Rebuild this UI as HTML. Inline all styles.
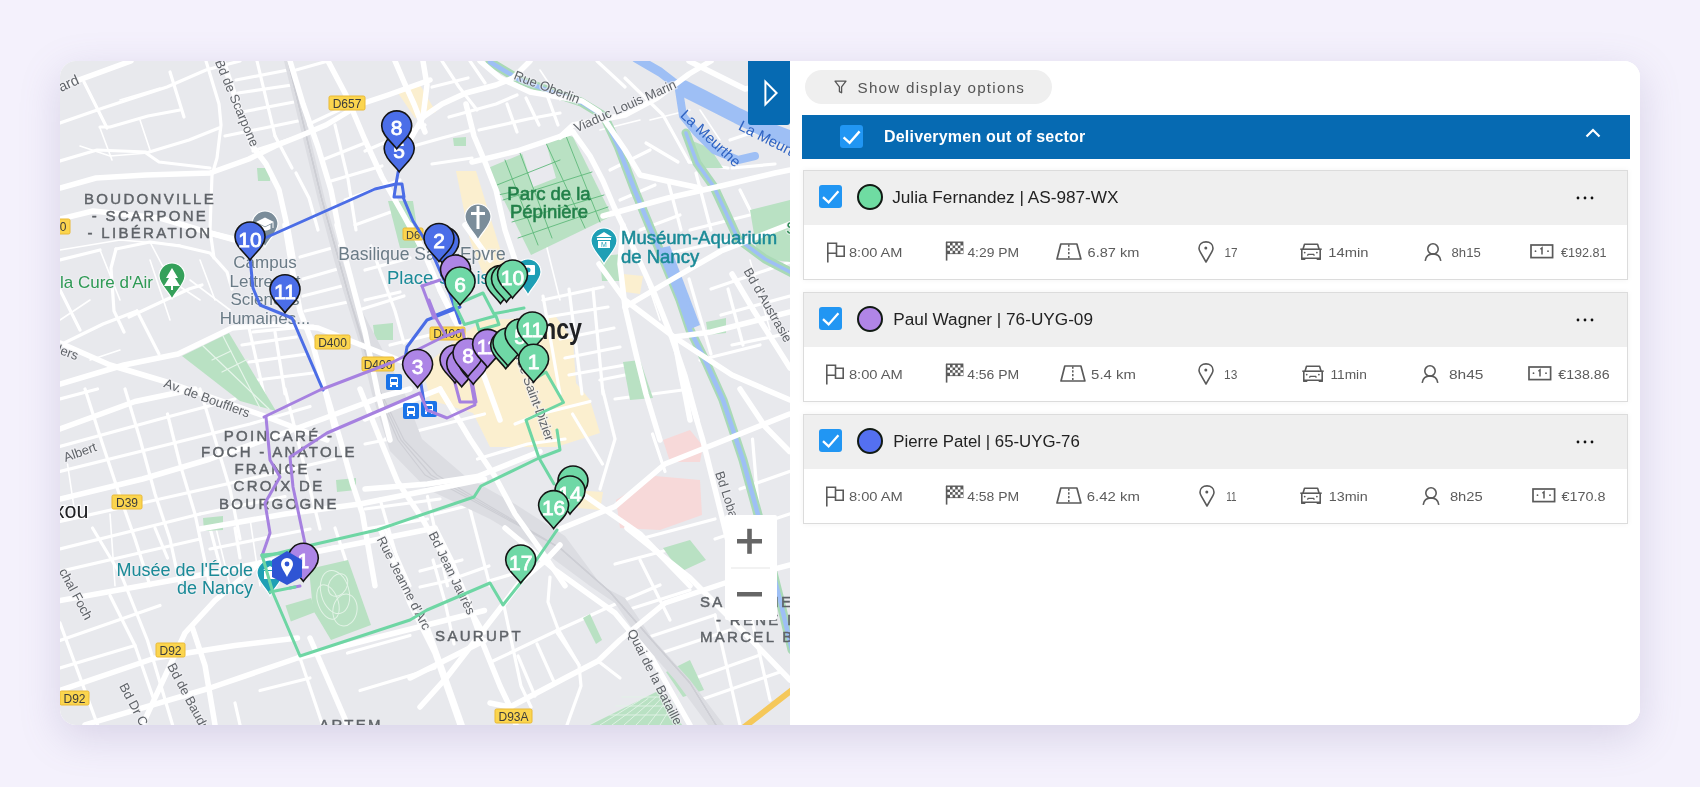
<!DOCTYPE html>
<html><head><meta charset="utf-8">
<style>
*{box-sizing:border-box;margin:0;padding:0}
#card,#overlay{will-change:transform}
html,body{width:1700px;height:787px;overflow:hidden;background:#f4f1fc;font-family:"Liberation Sans",sans-serif}
#card{position:absolute;left:60px;top:61px;width:1580px;height:664px;border-radius:16px;background:#fff;box-shadow:0 12px 40px rgba(120,105,160,0.22);overflow:hidden}
#map{position:absolute;left:0;top:0;width:730px;height:664px;background:#e8e9ed;overflow:hidden}
#panel{position:absolute;left:730px;top:0;width:850px;height:664px;background:#fff}
.abs{position:absolute}
#toggle{position:absolute;left:688px;top:0;width:42px;height:64px;background:#066ab2;border-radius:0 0 3px 3px}
#pill{position:absolute;left:745px;top:9px;width:247px;height:34px;border-radius:17px;background:#efefef}
#pill .t{position:absolute;left:52.5px;top:9px;font-size:15.2px;color:#555;white-space:nowrap;letter-spacing:1.25px}
#hdr{position:absolute;left:742px;top:54px;width:828px;height:44px;background:#066ab2}
.cb{position:absolute;width:23px;height:23px;border-radius:3px;background:#2196f3}
.cb svg{position:absolute;left:0;top:0}
#hdr .t{position:absolute;left:82px;top:13px;font-size:16px;font-weight:bold;color:#fff;white-space:nowrap;letter-spacing:0.2px}
.dcard{position:absolute;left:743px;width:825px;height:110px;border:1px solid #dcdcdc;background:#fff;box-shadow:0 0 6px rgba(0,0,0,0.05)}
.dcard .h{position:absolute;left:0;top:0;width:823px;height:54px;background:#efefef}
.dcard .nm{position:absolute;left:89px;top:18px;font-size:16px;color:#222;white-space:nowrap;letter-spacing:0.6px}
.dcard .dot{position:absolute;left:53px;top:13px;width:26px;height:26px;border-radius:50%;border:2px solid #111a14}
.dcard .more{position:absolute;left:772px;top:25px;width:18px;height:4px}
.cols{position:absolute;left:0;top:54px;width:823px;height:55px;display:flex}
.col{flex:1;display:flex;align-items:center;justify-content:center;color:#5a5a5a;font-size:13px;white-space:nowrap;letter-spacing:0.6px}
.col svg{flex:none}
</style></head><body>
<div id="card">
  <div id="map"><svg width="730" height="664" viewBox="60 61 730 664" style="position:absolute;left:0;top:0;font-family:Liberation Sans,sans-serif"><polygon points="423.0,367.0 456.0,340.0 483.0,320.0 556.0,317.0 573.0,340.0 576.0,383.0 590.0,400.0 600.0,433.0 556.0,447.0 490.0,447.0 473.0,413.0 430.0,400.0" fill="#fbefcf" /><polygon points="456.0,171.0 476.0,171.0 506.0,268.0 483.0,274.0 470.0,240.0" fill="#fbefcf" /><polygon points="396.0,90.0 420.0,85.0 436.0,112.0 415.0,118.0" fill="#fbefcf" /><polygon points="573.0,490.0 603.0,492.0 600.0,510.0 578.0,508.0" fill="#fbefcf" /><polygon points="623.0,274.0 643.0,276.0 640.0,294.0 625.0,292.0" fill="#fbefcf" /><polygon points="616.0,500.0 655.0,476.0 700.0,480.0 702.0,515.0 660.0,530.0 620.0,528.0" fill="#f7d9d9" /><polygon points="663.0,440.0 690.0,430.0 703.0,446.0 700.0,462.0 670.0,462.0" fill="#f7d9d9" /><polyline points="60.0,123.0 103.0,108.0 167.0,87.0 206.0,70.0 240.0,61.0" fill="none" stroke="#ffffff" stroke-width="3.2" stroke-linejoin="round" stroke-linecap="round" /><polyline points="84.0,82.0 107.0,128.0" fill="none" stroke="#ffffff" stroke-width="3.2" stroke-linejoin="round" stroke-linecap="round" /><polyline points="206.0,61.0 219.0,104.0 221.0,125.0 217.0,158.0 212.0,175.0 210.0,230.0 214.0,258.0" fill="none" stroke="#ffffff" stroke-width="3.2" stroke-linejoin="round" stroke-linecap="round" /><polyline points="219.0,128.0 189.0,140.0 146.0,153.0 159.0,162.0 210.0,168.0" fill="none" stroke="#ffffff" stroke-width="3.2" stroke-linejoin="round" stroke-linecap="round" /><polyline points="236.0,80.0 288.0,70.0" fill="none" stroke="#ffffff" stroke-width="3.2" stroke-linejoin="round" stroke-linecap="round" /><polyline points="238.0,93.0 292.0,85.0" fill="none" stroke="#ffffff" stroke-width="3.2" stroke-linejoin="round" stroke-linecap="round" /><polyline points="242.0,112.0 294.0,102.0" fill="none" stroke="#ffffff" stroke-width="3.2" stroke-linejoin="round" stroke-linecap="round" /><polyline points="225.0,136.0 298.0,121.0" fill="none" stroke="#ffffff" stroke-width="3.2" stroke-linejoin="round" stroke-linecap="round" /><polyline points="253.0,151.0 300.0,136.0" fill="none" stroke="#ffffff" stroke-width="3.2" stroke-linejoin="round" stroke-linecap="round" /><polyline points="257.0,61.0 275.0,136.0" fill="none" stroke="#ffffff" stroke-width="3.2" stroke-linejoin="round" stroke-linecap="round" /><polyline points="275.0,136.0 292.0,168.0" fill="none" stroke="#ffffff" stroke-width="3.2" stroke-linejoin="round" stroke-linecap="round" /><polyline points="296.0,70.0 328.0,61.0" fill="none" stroke="#ffffff" stroke-width="3.2" stroke-linejoin="round" stroke-linecap="round" /><polyline points="307.0,125.0 339.0,110.0" fill="none" stroke="#ffffff" stroke-width="3.2" stroke-linejoin="round" stroke-linecap="round" /><polyline points="322.0,160.0 365.0,143.0" fill="none" stroke="#ffffff" stroke-width="3.2" stroke-linejoin="round" stroke-linecap="round" /><polyline points="331.0,181.0 382.0,166.0" fill="none" stroke="#ffffff" stroke-width="3.2" stroke-linejoin="round" stroke-linecap="round" /><polyline points="335.0,125.0 348.0,179.0 356.0,230.0" fill="none" stroke="#ffffff" stroke-width="3.2" stroke-linejoin="round" stroke-linecap="round" /><polyline points="296.0,173.0 309.0,198.0 318.0,230.0" fill="none" stroke="#ffffff" stroke-width="3.2" stroke-linejoin="round" stroke-linecap="round" /><polyline points="365.0,151.0 425.0,125.0" fill="none" stroke="#ffffff" stroke-width="3.2" stroke-linejoin="round" stroke-linecap="round" /><polyline points="60.0,161.0 97.0,150.0 146.0,152.0" fill="none" stroke="#ffffff" stroke-width="3.2" stroke-linejoin="round" stroke-linecap="round" /><polyline points="100.0,127.0 110.0,127.0 148.0,116.0 180.0,110.0" fill="none" stroke="#ffffff" stroke-width="3.2" stroke-linejoin="round" stroke-linecap="round" /><polyline points="170.0,72.0 184.0,117.0" fill="none" stroke="#ffffff" stroke-width="3.2" stroke-linejoin="round" stroke-linecap="round" /><polyline points="345.0,200.0 400.0,180.0" fill="none" stroke="#ffffff" stroke-width="3.2" stroke-linejoin="round" stroke-linecap="round" /><polyline points="355.0,225.0 410.0,205.0" fill="none" stroke="#ffffff" stroke-width="3.2" stroke-linejoin="round" stroke-linecap="round" /><polyline points="80.0,146.0 110.0,156.0 148.0,153.0" fill="none" stroke="#ffffff" stroke-width="1.6" stroke-linejoin="round" stroke-linecap="round" /><polyline points="100.0,128.0 112.0,160.0" fill="none" stroke="#ffffff" stroke-width="1.6" stroke-linejoin="round" stroke-linecap="round" /><polyline points="120.0,100.0 160.0,88.0" fill="none" stroke="#ffffff" stroke-width="1.6" stroke-linejoin="round" stroke-linecap="round" /><polyline points="140.0,120.0 150.0,150.0" fill="none" stroke="#ffffff" stroke-width="1.6" stroke-linejoin="round" stroke-linecap="round" /><polyline points="60.0,250.0 120.0,240.0 180.0,245.0" fill="none" stroke="#ffffff" stroke-width="1.6" stroke-linejoin="round" stroke-linecap="round" /><polyline points="100.0,250.0 120.0,300.0" fill="none" stroke="#ffffff" stroke-width="1.6" stroke-linejoin="round" stroke-linecap="round" /><polyline points="150.0,260.0 170.0,320.0" fill="none" stroke="#ffffff" stroke-width="1.6" stroke-linejoin="round" stroke-linecap="round" /><polyline points="190.0,280.0 230.0,310.0" fill="none" stroke="#ffffff" stroke-width="1.6" stroke-linejoin="round" stroke-linecap="round" /><polyline points="442.0,61.0 459.0,87.0 477.0,110.0" fill="none" stroke="#ffffff" stroke-width="3.2" stroke-linejoin="round" stroke-linecap="round" /><polyline points="470.0,61.0 485.0,83.0" fill="none" stroke="#ffffff" stroke-width="3.2" stroke-linejoin="round" stroke-linecap="round" /><polyline points="432.0,87.0 468.0,78.0" fill="none" stroke="#ffffff" stroke-width="3.2" stroke-linejoin="round" stroke-linecap="round" /><polyline points="449.0,117.0 496.0,104.0 517.0,95.0" fill="none" stroke="#ffffff" stroke-width="3.2" stroke-linejoin="round" stroke-linecap="round" /><polyline points="410.0,147.0 442.0,138.0 472.0,130.0" fill="none" stroke="#ffffff" stroke-width="3.2" stroke-linejoin="round" stroke-linecap="round" /><polyline points="432.0,164.0 472.0,158.0" fill="none" stroke="#ffffff" stroke-width="3.2" stroke-linejoin="round" stroke-linecap="round" /><polyline points="507.0,104.0 517.0,132.0" fill="none" stroke="#ffffff" stroke-width="3.2" stroke-linejoin="round" stroke-linecap="round" /><polyline points="526.0,98.0 539.0,125.0" fill="none" stroke="#ffffff" stroke-width="3.2" stroke-linejoin="round" stroke-linecap="round" /><polyline points="547.0,95.0 558.0,125.0" fill="none" stroke="#ffffff" stroke-width="3.2" stroke-linejoin="round" stroke-linecap="round" /><polyline points="479.0,130.0 528.0,119.0 560.0,113.0" fill="none" stroke="#ffffff" stroke-width="3.2" stroke-linejoin="round" stroke-linecap="round" /><polyline points="625.0,78.0 663.0,115.0 689.0,162.0" fill="none" stroke="#ffffff" stroke-width="3.2" stroke-linejoin="round" stroke-linecap="round" /><polyline points="597.0,61.0 625.0,87.0" fill="none" stroke="#ffffff" stroke-width="3.2" stroke-linejoin="round" stroke-linecap="round" /><polyline points="646.0,143.0 678.0,162.0" fill="none" stroke="#ffffff" stroke-width="3.2" stroke-linejoin="round" stroke-linecap="round" /><polyline points="689.0,162.0 728.0,168.0" fill="none" stroke="#ffffff" stroke-width="3.2" stroke-linejoin="round" stroke-linecap="round" /><polyline points="732.0,168.0 775.0,164.0" fill="none" stroke="#ffffff" stroke-width="3.2" stroke-linejoin="round" stroke-linecap="round" /><polyline points="668.0,181.0 681.0,230.0" fill="none" stroke="#ffffff" stroke-width="3.2" stroke-linejoin="round" stroke-linecap="round" /><polyline points="696.0,173.0 711.0,230.0" fill="none" stroke="#ffffff" stroke-width="3.2" stroke-linejoin="round" stroke-linecap="round" /><polyline points="610.0,170.0 650.0,150.0" fill="none" stroke="#ffffff" stroke-width="3.2" stroke-linejoin="round" stroke-linecap="round" /><polyline points="620.0,200.0 655.0,185.0" fill="none" stroke="#ffffff" stroke-width="3.2" stroke-linejoin="round" stroke-linecap="round" /><polyline points="730.0,140.0 775.0,125.0" fill="none" stroke="#ffffff" stroke-width="3.2" stroke-linejoin="round" stroke-linecap="round" /><polyline points="740.0,190.0 760.0,230.0" fill="none" stroke="#ffffff" stroke-width="3.2" stroke-linejoin="round" stroke-linecap="round" /><polyline points="640.0,230.0 680.0,215.0" fill="none" stroke="#ffffff" stroke-width="3.2" stroke-linejoin="round" stroke-linecap="round" /><polyline points="540.0,70.0 560.0,100.0" fill="none" stroke="#ffffff" stroke-width="1.6" stroke-linejoin="round" stroke-linecap="round" /><polyline points="600.0,130.0 640.0,120.0" fill="none" stroke="#ffffff" stroke-width="1.6" stroke-linejoin="round" stroke-linecap="round" /><polyline points="700.0,110.0 720.0,140.0" fill="none" stroke="#ffffff" stroke-width="1.6" stroke-linejoin="round" stroke-linecap="round" /><polyline points="650.0,120.0 690.0,110.0" fill="none" stroke="#ffffff" stroke-width="1.6" stroke-linejoin="round" stroke-linecap="round" /><polyline points="116.0,249.0 150.0,242.0 180.0,246.0 210.0,253.0 227.0,272.0 232.0,289.0" fill="none" stroke="#ffffff" stroke-width="3.2" stroke-linejoin="round" stroke-linecap="round" /><polyline points="116.0,249.0 111.0,268.0 114.0,311.0 124.0,332.0" fill="none" stroke="#ffffff" stroke-width="3.2" stroke-linejoin="round" stroke-linecap="round" /><polyline points="129.0,317.0 189.0,289.0 202.0,285.0" fill="none" stroke="#ffffff" stroke-width="3.2" stroke-linejoin="round" stroke-linecap="round" /><polyline points="60.0,345.0 103.0,324.0 137.0,311.0" fill="none" stroke="#ffffff" stroke-width="3.2" stroke-linejoin="round" stroke-linecap="round" /><polyline points="137.0,311.0 159.0,354.0" fill="none" stroke="#ffffff" stroke-width="3.2" stroke-linejoin="round" stroke-linecap="round" /><polyline points="300.0,257.0 339.0,246.0" fill="none" stroke="#ffffff" stroke-width="3.2" stroke-linejoin="round" stroke-linecap="round" /><polyline points="303.0,279.0 341.0,268.0" fill="none" stroke="#ffffff" stroke-width="3.2" stroke-linejoin="round" stroke-linecap="round" /><polyline points="303.0,296.0 346.0,285.0" fill="none" stroke="#ffffff" stroke-width="3.2" stroke-linejoin="round" stroke-linecap="round" /><polyline points="305.0,311.0 348.0,302.0" fill="none" stroke="#ffffff" stroke-width="3.2" stroke-linejoin="round" stroke-linecap="round" /><polyline points="253.0,332.0 313.0,326.0" fill="none" stroke="#ffffff" stroke-width="3.2" stroke-linejoin="round" stroke-linecap="round" /><polyline points="242.0,345.0 296.0,337.0" fill="none" stroke="#ffffff" stroke-width="3.2" stroke-linejoin="round" stroke-linecap="round" /><polyline points="249.0,362.0 307.0,354.0" fill="none" stroke="#ffffff" stroke-width="3.2" stroke-linejoin="round" stroke-linecap="round" /><polyline points="257.0,380.0 313.0,373.0" fill="none" stroke="#ffffff" stroke-width="3.2" stroke-linejoin="round" stroke-linecap="round" /><polyline points="249.0,328.0 264.0,394.0" fill="none" stroke="#ffffff" stroke-width="3.2" stroke-linejoin="round" stroke-linecap="round" /><polyline points="275.0,332.0 285.0,394.0" fill="none" stroke="#ffffff" stroke-width="3.2" stroke-linejoin="round" stroke-linecap="round" /><polyline points="371.0,246.0 395.0,311.0 404.0,343.0" fill="none" stroke="#ffffff" stroke-width="3.2" stroke-linejoin="round" stroke-linecap="round" /><polyline points="356.0,311.0 404.0,296.0" fill="none" stroke="#ffffff" stroke-width="3.2" stroke-linejoin="round" stroke-linecap="round" /><polyline points="60.0,290.0 80.0,330.0" fill="none" stroke="#ffffff" stroke-width="3.2" stroke-linejoin="round" stroke-linecap="round" /><polyline points="60.0,260.0 100.0,250.0" fill="none" stroke="#ffffff" stroke-width="3.2" stroke-linejoin="round" stroke-linecap="round" /><polyline points="150.0,242.0 170.0,280.0 200.0,300.0" fill="none" stroke="#ffffff" stroke-width="1.6" stroke-linejoin="round" stroke-linecap="round" /><polyline points="60.0,320.0 90.0,300.0" fill="none" stroke="#ffffff" stroke-width="1.6" stroke-linejoin="round" stroke-linecap="round" /><polyline points="90.0,360.0 120.0,350.0" fill="none" stroke="#ffffff" stroke-width="1.6" stroke-linejoin="round" stroke-linecap="round" /><polyline points="200.0,260.0 215.0,300.0" fill="none" stroke="#ffffff" stroke-width="1.6" stroke-linejoin="round" stroke-linecap="round" /><polyline points="543.0,300.0 603.0,287.0" fill="none" stroke="#ffffff" stroke-width="3.2" stroke-linejoin="round" stroke-linecap="round" /><polyline points="547.0,317.0 608.0,307.0" fill="none" stroke="#ffffff" stroke-width="3.2" stroke-linejoin="round" stroke-linecap="round" /><polyline points="560.0,339.0 614.0,328.0" fill="none" stroke="#ffffff" stroke-width="3.2" stroke-linejoin="round" stroke-linecap="round" /><polyline points="565.0,358.0 620.0,347.0" fill="none" stroke="#ffffff" stroke-width="3.2" stroke-linejoin="round" stroke-linecap="round" /><polyline points="569.0,375.0 625.0,365.0" fill="none" stroke="#ffffff" stroke-width="3.2" stroke-linejoin="round" stroke-linecap="round" /><polyline points="543.0,296.0 560.0,394.0" fill="none" stroke="#ffffff" stroke-width="3.2" stroke-linejoin="round" stroke-linecap="round" /><polyline points="569.0,289.0 582.0,394.0" fill="none" stroke="#ffffff" stroke-width="3.2" stroke-linejoin="round" stroke-linecap="round" /><polyline points="593.0,289.0 603.0,394.0" fill="none" stroke="#ffffff" stroke-width="3.2" stroke-linejoin="round" stroke-linecap="round" /><polyline points="711.0,289.0 790.0,262.0" fill="none" stroke="#ffffff" stroke-width="3.2" stroke-linejoin="round" stroke-linecap="round" /><polyline points="721.0,315.0 790.0,296.0" fill="none" stroke="#ffffff" stroke-width="3.2" stroke-linejoin="round" stroke-linecap="round" /><polyline points="732.0,345.0 790.0,333.0" fill="none" stroke="#ffffff" stroke-width="3.2" stroke-linejoin="round" stroke-linecap="round" /><polyline points="689.0,279.0 711.0,354.0" fill="none" stroke="#ffffff" stroke-width="3.2" stroke-linejoin="round" stroke-linecap="round" /><polyline points="728.0,289.0 743.0,345.0" fill="none" stroke="#ffffff" stroke-width="3.2" stroke-linejoin="round" stroke-linecap="round" /><polyline points="670.0,253.0 730.0,240.0" fill="none" stroke="#ffffff" stroke-width="3.2" stroke-linejoin="round" stroke-linecap="round" /><polyline points="690.0,230.0 750.0,215.0" fill="none" stroke="#ffffff" stroke-width="3.2" stroke-linejoin="round" stroke-linecap="round" /><polyline points="700.0,360.0 760.0,345.0" fill="none" stroke="#ffffff" stroke-width="3.2" stroke-linejoin="round" stroke-linecap="round" /><polyline points="600.0,380.0 640.0,372.0" fill="none" stroke="#ffffff" stroke-width="3.2" stroke-linejoin="round" stroke-linecap="round" /><polyline points="365.0,270.0 410.0,258.0" fill="none" stroke="#ffffff" stroke-width="3.2" stroke-linejoin="round" stroke-linecap="round" /><polyline points="365.0,300.0 400.0,292.0" fill="none" stroke="#ffffff" stroke-width="3.2" stroke-linejoin="round" stroke-linecap="round" /><polyline points="390.0,345.0 430.0,335.0" fill="none" stroke="#ffffff" stroke-width="3.2" stroke-linejoin="round" stroke-linecap="round" /><polyline points="560.0,300.0 545.0,240.0" fill="none" stroke="#ffffff" stroke-width="1.6" stroke-linejoin="round" stroke-linecap="round" /><polyline points="640.0,260.0 660.0,320.0" fill="none" stroke="#ffffff" stroke-width="1.6" stroke-linejoin="round" stroke-linecap="round" /><polyline points="750.0,260.0 770.0,330.0" fill="none" stroke="#ffffff" stroke-width="1.6" stroke-linejoin="round" stroke-linecap="round" /><polyline points="60.0,399.0 97.5,389.0" fill="none" stroke="#ffffff" stroke-width="3.2" stroke-linejoin="round" stroke-linecap="round" /><polyline points="60.0,446.5 160.0,419.0 235.0,399.0" fill="none" stroke="#ffffff" stroke-width="3.2" stroke-linejoin="round" stroke-linecap="round" /><polyline points="60.0,471.5 160.0,446.5 250.0,424.0 310.0,406.5" fill="none" stroke="#ffffff" stroke-width="3.2" stroke-linejoin="round" stroke-linecap="round" /><polyline points="60.0,521.5 160.0,499.0 260.0,476.5 335.0,459.0" fill="none" stroke="#ffffff" stroke-width="3.2" stroke-linejoin="round" stroke-linecap="round" /><polyline points="60.0,549.0 160.0,524.0 200.0,514.0" fill="none" stroke="#ffffff" stroke-width="3.2" stroke-linejoin="round" stroke-linecap="round" /><polyline points="60.0,571.5 135.0,554.0 200.0,539.0" fill="none" stroke="#ffffff" stroke-width="3.2" stroke-linejoin="round" stroke-linecap="round" /><polyline points="85.0,389.0 102.5,444.0 120.0,496.5 135.0,539.0 150.0,585.8" fill="none" stroke="#ffffff" stroke-width="3.2" stroke-linejoin="round" stroke-linecap="round" /><polyline points="125.0,389.0 140.0,439.0 155.0,494.0 170.0,539.0 180.0,585.8" fill="none" stroke="#ffffff" stroke-width="3.2" stroke-linejoin="round" stroke-linecap="round" /><polyline points="167.5,414.0 180.0,464.0 195.0,514.0 210.0,585.8" fill="none" stroke="#ffffff" stroke-width="3.2" stroke-linejoin="round" stroke-linecap="round" /><polyline points="200.0,389.0 215.0,439.0 230.0,489.0 240.0,539.0" fill="none" stroke="#ffffff" stroke-width="3.2" stroke-linejoin="round" stroke-linecap="round" /><polyline points="285.0,389.0 297.5,439.0 310.0,489.0 320.0,529.0" fill="none" stroke="#ffffff" stroke-width="3.2" stroke-linejoin="round" stroke-linecap="round" /><polyline points="397.5,389.0 410.0,426.5 435.0,476.5" fill="none" stroke="#ffffff" stroke-width="3.2" stroke-linejoin="round" stroke-linecap="round" /><polyline points="200.0,514.0 285.0,496.5" fill="none" stroke="#ffffff" stroke-width="3.2" stroke-linejoin="round" stroke-linecap="round" /><polyline points="210.0,549.0 310.0,529.0" fill="none" stroke="#ffffff" stroke-width="3.2" stroke-linejoin="round" stroke-linecap="round" /><polyline points="222.5,571.5 335.0,546.5" fill="none" stroke="#ffffff" stroke-width="3.2" stroke-linejoin="round" stroke-linecap="round" /><polyline points="385.0,529.0 410.0,585.8" fill="none" stroke="#ffffff" stroke-width="3.2" stroke-linejoin="round" stroke-linecap="round" /><polyline points="435.0,514.0 484.5,501.5" fill="none" stroke="#ffffff" stroke-width="3.2" stroke-linejoin="round" stroke-linecap="round" /><polyline points="385.0,439.0 484.5,414.0" fill="none" stroke="#ffffff" stroke-width="3.2" stroke-linejoin="round" stroke-linecap="round" /><polyline points="67.5,464.0 75.0,514.0" fill="none" stroke="#ffffff" stroke-width="1.6" stroke-linejoin="round" stroke-linecap="round" /><polyline points="110.0,514.0 115.0,585.8" fill="none" stroke="#ffffff" stroke-width="1.6" stroke-linejoin="round" stroke-linecap="round" /><polyline points="215.0,524.0 230.0,585.8" fill="none" stroke="#ffffff" stroke-width="1.6" stroke-linejoin="round" stroke-linecap="round" /><polyline points="250.0,519.0 260.0,585.8" fill="none" stroke="#ffffff" stroke-width="1.6" stroke-linejoin="round" stroke-linecap="round" /><polyline points="515.0,424.0 540.0,414.0 590.0,401.5" fill="none" stroke="#ffffff" stroke-width="3.2" stroke-linejoin="round" stroke-linecap="round" /><polyline points="477.5,459.0 527.5,444.0 565.0,439.0" fill="none" stroke="#ffffff" stroke-width="3.2" stroke-linejoin="round" stroke-linecap="round" /><polyline points="602.5,389.0 615.0,439.0 600.0,489.0" fill="none" stroke="#ffffff" stroke-width="3.2" stroke-linejoin="round" stroke-linecap="round" /><polyline points="572.5,414.0 602.5,464.0" fill="none" stroke="#ffffff" stroke-width="3.2" stroke-linejoin="round" stroke-linecap="round" /><polyline points="365.0,509.0 440.0,499.0" fill="none" stroke="#ffffff" stroke-width="3.2" stroke-linejoin="round" stroke-linecap="round" /><polyline points="365.0,529.0 427.5,519.0" fill="none" stroke="#ffffff" stroke-width="3.2" stroke-linejoin="round" stroke-linecap="round" /><polyline points="380.0,499.0 405.0,585.8" fill="none" stroke="#ffffff" stroke-width="3.2" stroke-linejoin="round" stroke-linecap="round" /><polyline points="427.5,496.5 447.5,585.8" fill="none" stroke="#ffffff" stroke-width="3.2" stroke-linejoin="round" stroke-linecap="round" /><polyline points="470.0,509.0 490.0,585.8" fill="none" stroke="#ffffff" stroke-width="3.2" stroke-linejoin="round" stroke-linecap="round" /><polyline points="615.0,399.0 690.0,389.0" fill="none" stroke="#ffffff" stroke-width="3.2" stroke-linejoin="round" stroke-linecap="round" /><polyline points="652.5,434.0 665.0,471.5" fill="none" stroke="#ffffff" stroke-width="3.2" stroke-linejoin="round" stroke-linecap="round" /><polyline points="640.0,539.0 715.0,519.0" fill="none" stroke="#ffffff" stroke-width="3.2" stroke-linejoin="round" stroke-linecap="round" /><polyline points="615.0,564.0 690.0,544.0" fill="none" stroke="#ffffff" stroke-width="3.2" stroke-linejoin="round" stroke-linecap="round" /><polyline points="715.0,539.0 789.5,514.0" fill="none" stroke="#ffffff" stroke-width="3.2" stroke-linejoin="round" stroke-linecap="round" /><polyline points="740.0,489.0 789.5,471.5" fill="none" stroke="#ffffff" stroke-width="3.2" stroke-linejoin="round" stroke-linecap="round" /><polyline points="752.5,439.0 765.0,585.8" fill="none" stroke="#ffffff" stroke-width="3.2" stroke-linejoin="round" stroke-linecap="round" /><polyline points="365.0,444.0 415.0,434.0" fill="none" stroke="#ffffff" stroke-width="3.2" stroke-linejoin="round" stroke-linecap="round" /><polyline points="92.5,528.0 122.5,578.0 147.5,640.5 172.5,724.8" fill="none" stroke="#ffffff" stroke-width="3.2" stroke-linejoin="round" stroke-linecap="round" /><polyline points="60.0,640.5 110.0,623.0 160.0,605.5" fill="none" stroke="#ffffff" stroke-width="3.2" stroke-linejoin="round" stroke-linecap="round" /><polyline points="60.0,668.0 135.0,645.5" fill="none" stroke="#ffffff" stroke-width="3.2" stroke-linejoin="round" stroke-linecap="round" /><polyline points="110.0,595.5 135.0,645.5 155.0,703.0" fill="none" stroke="#ffffff" stroke-width="3.2" stroke-linejoin="round" stroke-linecap="round" /><polyline points="60.0,623.0 97.5,724.8" fill="none" stroke="#ffffff" stroke-width="3.2" stroke-linejoin="round" stroke-linecap="round" /><polyline points="210.0,528.0 220.0,565.5" fill="none" stroke="#ffffff" stroke-width="3.2" stroke-linejoin="round" stroke-linecap="round" /><polyline points="235.0,528.0 240.0,558.0" fill="none" stroke="#ffffff" stroke-width="3.2" stroke-linejoin="round" stroke-linecap="round" /><polyline points="300.0,658.0 322.5,724.8" fill="none" stroke="#ffffff" stroke-width="3.2" stroke-linejoin="round" stroke-linecap="round" /><polyline points="335.0,528.0 347.5,565.5" fill="none" stroke="#ffffff" stroke-width="3.2" stroke-linejoin="round" stroke-linecap="round" /><polyline points="347.5,653.0 410.0,635.5" fill="none" stroke="#ffffff" stroke-width="3.2" stroke-linejoin="round" stroke-linecap="round" /><polyline points="360.0,690.5 435.0,668.0" fill="none" stroke="#ffffff" stroke-width="3.2" stroke-linejoin="round" stroke-linecap="round" /><polyline points="435.0,528.0 460.0,590.5 484.5,633.0" fill="none" stroke="#ffffff" stroke-width="3.2" stroke-linejoin="round" stroke-linecap="round" /><polyline points="260.0,690.5 310.0,678.0" fill="none" stroke="#ffffff" stroke-width="3.2" stroke-linejoin="round" stroke-linecap="round" /><polyline points="235.0,703.0 240.0,724.8" fill="none" stroke="#ffffff" stroke-width="3.2" stroke-linejoin="round" stroke-linecap="round" /><polyline points="155.0,528.0 167.5,558.0" fill="none" stroke="#ffffff" stroke-width="3.2" stroke-linejoin="round" stroke-linecap="round" /><polyline points="420.0,571.0 462.0,560.0" fill="none" stroke="#ffffff" stroke-width="3.2" stroke-linejoin="round" stroke-linecap="round" /><polyline points="489.0,581.0 516.0,573.0" fill="none" stroke="#ffffff" stroke-width="3.2" stroke-linejoin="round" stroke-linecap="round" /><polyline points="493.0,661.0 556.0,631.0 620.0,602.0 660.0,585.0" fill="none" stroke="#ffffff" stroke-width="3.2" stroke-linejoin="round" stroke-linecap="round" /><polyline points="504.0,606.0 521.0,686.0 531.0,707.0" fill="none" stroke="#ffffff" stroke-width="3.2" stroke-linejoin="round" stroke-linecap="round" /><polyline points="518.0,656.0 535.0,696.0" fill="none" stroke="#ffffff" stroke-width="3.2" stroke-linejoin="round" stroke-linecap="round" /><polyline points="537.0,644.0 554.0,682.0" fill="none" stroke="#ffffff" stroke-width="3.2" stroke-linejoin="round" stroke-linecap="round" /><polyline points="556.0,631.0 579.0,665.0" fill="none" stroke="#ffffff" stroke-width="3.2" stroke-linejoin="round" stroke-linecap="round" /><polyline points="550.0,577.0 548.0,602.0 558.0,629.0 579.0,665.0 581.0,686.0 567.0,725.0" fill="none" stroke="#ffffff" stroke-width="3.2" stroke-linejoin="round" stroke-linecap="round" /><polyline points="433.0,560.0 445.0,602.0 454.0,644.0" fill="none" stroke="#ffffff" stroke-width="3.2" stroke-linejoin="round" stroke-linecap="round" /><polyline points="420.0,587.0 447.0,581.0 489.0,566.0" fill="none" stroke="#ffffff" stroke-width="3.2" stroke-linejoin="round" stroke-linecap="round" /><polyline points="598.0,661.0 620.0,678.0" fill="none" stroke="#ffffff" stroke-width="3.2" stroke-linejoin="round" stroke-linecap="round" /><polyline points="627.0,610.0 690.0,590.0" fill="none" stroke="#ffffff" stroke-width="3.2" stroke-linejoin="round" stroke-linecap="round" /><polyline points="640.0,640.0 715.0,615.0" fill="none" stroke="#ffffff" stroke-width="3.2" stroke-linejoin="round" stroke-linecap="round" /><polyline points="655.0,655.0 730.0,630.0" fill="none" stroke="#ffffff" stroke-width="3.2" stroke-linejoin="round" stroke-linecap="round" /><polyline points="690.0,680.0 760.0,655.0" fill="none" stroke="#ffffff" stroke-width="3.2" stroke-linejoin="round" stroke-linecap="round" /><polyline points="700.0,700.0 780.0,672.0" fill="none" stroke="#ffffff" stroke-width="3.2" stroke-linejoin="round" stroke-linecap="round" /><polyline points="715.0,615.0 740.0,725.0" fill="none" stroke="#ffffff" stroke-width="3.2" stroke-linejoin="round" stroke-linecap="round" /><polyline points="745.0,590.0 770.0,700.0" fill="none" stroke="#ffffff" stroke-width="3.2" stroke-linejoin="round" stroke-linecap="round" /><polyline points="640.0,560.0 670.0,620.0" fill="none" stroke="#ffffff" stroke-width="3.2" stroke-linejoin="round" stroke-linecap="round" /><polygon points="488.0,168.0 567.0,135.0 573.0,137.0 612.0,216.0 531.0,255.0" fill="#b9e1c3" /><polygon points="522.0,153.0 546.0,143.0 556.0,178.0 533.0,187.0" fill="#e9e9ee" /><polyline points="505.0,160.0 538.0,245.0" fill="none" stroke="#5fb97b" stroke-width="0.9" stroke-linejoin="round" stroke-linecap="round" /><polyline points="520.0,153.0 552.0,238.0" fill="none" stroke="#5fb97b" stroke-width="0.9" stroke-linejoin="round" stroke-linecap="round" /><polyline points="546.0,143.0 585.0,228.0" fill="none" stroke="#5fb97b" stroke-width="0.9" stroke-linejoin="round" stroke-linecap="round" /><polyline points="566.0,136.0 600.0,222.0" fill="none" stroke="#5fb97b" stroke-width="0.9" stroke-linejoin="round" stroke-linecap="round" /><polyline points="497.0,185.0 560.0,160.0" fill="none" stroke="#5fb97b" stroke-width="0.9" stroke-linejoin="round" stroke-linecap="round" /><polyline points="503.0,200.0 592.0,172.0" fill="none" stroke="#5fb97b" stroke-width="0.9" stroke-linejoin="round" stroke-linecap="round" /><polyline points="512.0,222.0 604.0,195.0" fill="none" stroke="#5fb97b" stroke-width="0.9" stroke-linejoin="round" stroke-linecap="round" /><polyline points="518.0,238.0 608.0,207.0" fill="none" stroke="#5fb97b" stroke-width="0.9" stroke-linejoin="round" stroke-linecap="round" /><polyline points="498.0,195.0 512.0,192.0" fill="none" stroke="#5fb97b" stroke-width="0.9" stroke-linejoin="round" stroke-linecap="round" /><polygon points="182.0,356.0 229.0,333.0 276.0,411.0 240.0,401.0" fill="#b9e1c3" /><polyline points="202.0,345.0 269.0,409.0" fill="none" stroke="#e6f5ea" stroke-width="1.2" stroke-linejoin="round" stroke-linecap="round" /><polyline points="223.0,336.0 260.0,408.0" fill="none" stroke="#e6f5ea" stroke-width="1.2" stroke-linejoin="round" stroke-linecap="round" /><polyline points="212.0,360.0 231.0,351.0" fill="none" stroke="#e6f5ea" stroke-width="1.2" stroke-linejoin="round" stroke-linecap="round" /><polyline points="222.0,372.0 248.0,359.0" fill="none" stroke="#e6f5ea" stroke-width="1.2" stroke-linejoin="round" stroke-linecap="round" /><polygon points="309.0,569.0 348.0,560.0 371.0,625.0 331.0,640.0 313.0,610.0" fill="#b9e1c3" /><ellipse cx="335" cy="592" rx="14" ry="22" transform="rotate(-15 335 592)" fill="none" stroke="#e2f3e6" stroke-width="1"/><ellipse cx="328" cy="602" rx="10" ry="18" transform="rotate(-20 328 602)" fill="none" stroke="#e2f3e6" stroke-width="1"/><ellipse cx="345" cy="610" rx="12" ry="16" transform="rotate(10 345 610)" fill="none" stroke="#e2f3e6" stroke-width="1"/><ellipse cx="338" cy="585" rx="9" ry="12" transform="rotate(30 338 585)" fill="none" stroke="#e2f3e6" stroke-width="1"/><polygon points="285.5,605.4 311.2,598.0 315.5,612.0 290.8,621.5" fill="#b9e1c3" /><polygon points="590.0,725.0 660.0,690.0 682.0,725.0" fill="#b9e1c3" /><polyline points="600.0,725.0 640.0,700.0" fill="none" stroke="#e2f3e6" stroke-width="0.9" stroke-linejoin="round" stroke-linecap="round" /><polyline points="612.0,725.0 648.0,698.5" fill="none" stroke="#e2f3e6" stroke-width="0.9" stroke-linejoin="round" stroke-linecap="round" /><polyline points="624.0,725.0 656.0,697.0" fill="none" stroke="#e2f3e6" stroke-width="0.9" stroke-linejoin="round" stroke-linecap="round" /><polyline points="636.0,725.0 664.0,695.5" fill="none" stroke="#e2f3e6" stroke-width="0.9" stroke-linejoin="round" stroke-linecap="round" /><polyline points="648.0,725.0 672.0,694.0" fill="none" stroke="#e2f3e6" stroke-width="0.9" stroke-linejoin="round" stroke-linecap="round" /><polyline points="660.0,725.0 680.0,692.5" fill="none" stroke="#e2f3e6" stroke-width="0.9" stroke-linejoin="round" stroke-linecap="round" /><polyline points="610.0,715.0 675.0,715.0" fill="none" stroke="#e2f3e6" stroke-width="0.9" stroke-linejoin="round" stroke-linecap="round" /><polyline points="616.0,706.0 673.0,706.0" fill="none" stroke="#e2f3e6" stroke-width="0.9" stroke-linejoin="round" stroke-linecap="round" /><polyline points="622.0,697.0 671.0,697.0" fill="none" stroke="#e2f3e6" stroke-width="0.9" stroke-linejoin="round" stroke-linecap="round" /><polygon points="666.0,672.0 690.0,660.0 704.0,690.0 683.0,697.0" fill="#b9e1c3" /><polygon points="663.0,548.0 690.0,540.0 706.0,560.0 680.0,572.0" fill="#b9e1c3" /><polygon points="583.0,618.0 590.0,614.0 602.0,640.0 596.0,644.0" fill="#b9e1c3" /><polygon points="203.0,518.0 223.0,516.0 223.0,530.0 204.0,531.0" fill="#b9e1c3" /><polygon points="336.0,480.0 356.0,478.0 356.0,490.0 337.0,492.0" fill="#b9e1c3" /><polygon points="373.0,325.0 393.0,323.0 393.0,340.0 375.0,340.0" fill="#b9e1c3" /><polygon points="623.0,362.0 640.0,360.0 653.0,398.0 630.0,400.0" fill="#b9e1c3" /><polygon points="706.0,322.0 726.0,318.0 726.0,333.0 708.0,335.0" fill="#b9e1c3" /><polygon points="600.0,256.0 623.0,254.0 623.0,281.0 602.0,281.0" fill="#b9e1c3" /><polygon points="750.0,210.0 790.0,200.0 790.0,262.0 758.0,258.0" fill="#b9e1c3" /><polygon points="690.0,140.0 710.0,148.0 723.0,168.0 700.0,168.0" fill="#b9e1c3" /><polygon points="257.0,168.0 270.0,168.0 270.0,181.0 258.0,181.0" fill="#b9e1c3" /><polygon points="388.0,201.0 413.0,201.0 420.0,248.0 400.0,248.0" fill="#b9e1c3" /><polygon points="453.0,138.0 466.0,137.0 466.0,146.0 454.0,146.0" fill="#b9e1c3" /><polygon points="284.0,61.0 318.0,200.0 334.0,260.0 346.0,300.0 360.0,345.0 372.0,394.0 390.0,451.0 427.0,489.0 490.0,519.0 540.0,549.0 590.0,586.0 615.0,603.0 640.0,640.0 675.0,680.0 708.0,725.0 724.0,725.0 690.0,680.0 652.0,638.0 625.0,598.0 602.0,586.0 565.0,536.0 515.0,504.0 465.0,476.0 422.0,439.0 405.0,394.0 380.0,345.0 356.0,300.0 342.0,260.0 325.0,200.0 292.0,61.0" fill="#dcdde2" /><polyline points="288.0,61.0 322.0,200.0 350.0,300.0 376.0,390.0 398.0,440.0 425.0,475.0 490.0,510.0 560.0,548.0 610.0,592.0 650.0,638.0 690.0,683.0 716.0,725.0" fill="none" stroke="#cdced4" stroke-width="1.2" stroke-linejoin="round" stroke-linecap="round" stroke-linecap="butt"/><polyline points="288.0,61.0 322.0,200.0 350.0,300.0 377.8,390.0 401.0,440.0 431.0,475.0 493.0,510.0 560.0,548.0 610.0,592.0 650.0,638.0 690.0,683.0 716.0,725.0" fill="none" stroke="#cdced4" stroke-width="1.2" stroke-linejoin="round" stroke-linecap="round" stroke-linecap="butt"/><polyline points="288.0,61.0 322.0,200.0 350.0,300.0 379.6,390.0 404.0,440.0 437.0,475.0 496.0,510.0 560.0,548.0 610.0,592.0 650.0,638.0 690.0,683.0 716.0,725.0" fill="none" stroke="#cdced4" stroke-width="1.2" stroke-linejoin="round" stroke-linecap="round" stroke-linecap="butt"/><polyline points="686.0,133.0 697.0,163.0 714.0,187.0 727.0,215.0 738.0,239.0 765.0,259.0 794.0,274.0" fill="none" stroke="#a9d9b6" stroke-width="9" stroke-linejoin="round" stroke-linecap="round" /><polyline points="686.0,133.0 697.0,163.0 714.0,187.0 727.0,215.0 738.0,239.0 765.0,259.0 794.0,274.0" fill="none" stroke="#9ebff5" stroke-width="3.5" stroke-linejoin="round" stroke-linecap="round" /><polygon points="751.0,211.0 790.0,203.0 790.0,252.0 765.0,240.0" fill="#b9e1c3" /><polyline points="490.0,62.0 520.0,80.0 560.0,95.0 581.0,102.0 604.0,116.0 618.0,146.0 635.0,191.0 652.0,232.0 666.0,266.0 680.0,300.0 690.0,330.0 706.0,362.0 723.0,400.0 743.0,460.0 763.0,533.0 780.0,600.0 792.0,650.0" fill="none" stroke="#a9d9b6" stroke-width="9" stroke-linejoin="round" stroke-linecap="round" /><polyline points="490.0,62.0 520.0,80.0 560.0,95.0 581.0,102.0 604.0,116.0 618.0,146.0 635.0,191.0 652.0,232.0 666.0,266.0 680.0,300.0 690.0,330.0 706.0,362.0 723.0,400.0 743.0,460.0 763.0,533.0 780.0,600.0 792.0,650.0" fill="none" stroke="#9ebff5" stroke-width="4.5" stroke-linejoin="round" stroke-linecap="round" /><polygon points="660.0,248.0 670.0,246.0 700.0,325.0 688.0,330.0" fill="#9ebff5" /><rect x="679.0" y="285" width="4" height="5" fill="#9ebff5" transform="rotate(-20 681.0 287)"/><rect x="682.2" y="293" width="4" height="5" fill="#9ebff5" transform="rotate(-20 684.2 295)"/><rect x="685.4" y="301" width="4" height="5" fill="#9ebff5" transform="rotate(-20 687.4 303)"/><rect x="688.6" y="309" width="4" height="5" fill="#9ebff5" transform="rotate(-20 690.6 311)"/><rect x="691.8" y="317" width="4" height="5" fill="#9ebff5" transform="rotate(-20 693.8 319)"/><polyline points="636.0,58.0 660.0,72.0 673.0,82.0 683.0,88.0" fill="none" stroke="#9ebff5" stroke-width="9" stroke-linejoin="round" stroke-linecap="round" /><polyline points="683.0,88.0 703.0,98.0 738.0,116.0 765.0,129.0 794.0,140.0" fill="none" stroke="#9ebff5" stroke-width="16" stroke-linejoin="round" stroke-linecap="round" /><polyline points="679.0,90.0 683.0,116.0 697.0,133.0 714.0,150.0 738.0,160.0 755.0,156.0" fill="none" stroke="#9ebff5" stroke-width="8" stroke-linejoin="round" stroke-linecap="round" /><polyline points="60.0,87.0 131.0,61.0" fill="none" stroke="#ffffff" stroke-width="5.5" stroke-linejoin="round" stroke-linecap="round" /><polyline points="60.0,188.0 96.0,178.0 146.0,175.0 210.0,173.0 249.0,159.0 275.0,146.0 300.0,136.0 326.0,125.0 361.0,104.0 388.0,95.0 430.0,80.0" fill="none" stroke="#ffffff" stroke-width="5.5" stroke-linejoin="round" stroke-linecap="round" /><polyline points="223.0,61.0 242.0,117.0 253.0,147.0 266.0,164.0 279.0,190.0 288.0,230.0 293.0,258.0" fill="none" stroke="#ffffff" stroke-width="5.5" stroke-linejoin="round" stroke-linecap="round" /><polyline points="290.0,61.0 303.0,104.0 318.0,147.0 331.0,190.0 339.0,230.0 346.0,258.0" fill="none" stroke="#ffffff" stroke-width="5.5" stroke-linejoin="round" stroke-linecap="round" /><polyline points="328.0,61.0 346.0,95.0 365.0,140.0 382.0,177.0 404.0,216.0 420.0,245.0" fill="none" stroke="#ffffff" stroke-width="5.5" stroke-linejoin="round" stroke-linecap="round" /><polyline points="395.0,61.0 404.0,82.0 414.0,104.0 425.0,132.0" fill="none" stroke="#ffffff" stroke-width="5.5" stroke-linejoin="round" stroke-linecap="round" /><polyline points="60.0,219.0 93.0,211.0 160.0,218.0 210.0,233.0 250.0,243.0" fill="none" stroke="#ffffff" stroke-width="5.5" stroke-linejoin="round" stroke-linecap="round" /><polyline points="480.0,61.0 500.0,78.0 530.0,92.0 582.0,101.0 599.0,112.0 608.0,125.0" fill="none" stroke="#ffffff" stroke-width="5.5" stroke-linejoin="round" stroke-linecap="round" /><polyline points="573.0,132.0 590.0,156.0 603.0,181.0 614.0,207.0 625.0,230.0 640.0,262.0 655.0,295.0 672.0,338.0 685.0,376.0 697.0,420.0" fill="none" stroke="#ffffff" stroke-width="5.5" stroke-linejoin="round" stroke-linecap="round" /><polyline points="560.0,137.0 573.0,125.0 625.0,115.0 657.0,98.0 689.0,74.0 711.0,61.0" fill="none" stroke="#ffffff" stroke-width="5.5" stroke-linejoin="round" stroke-linecap="round" /><polyline points="603.0,216.0 668.0,198.0 721.0,186.0 775.0,173.0 790.0,170.0" fill="none" stroke="#ffffff" stroke-width="5.5" stroke-linejoin="round" stroke-linecap="round" /><polyline points="423.0,117.0 442.0,104.0 466.0,93.0 496.0,85.0 513.0,78.0 530.0,61.0" fill="none" stroke="#ffffff" stroke-width="5.5" stroke-linejoin="round" stroke-linecap="round" /><polyline points="410.0,140.0 423.0,117.0 427.0,85.0 423.0,61.0" fill="none" stroke="#ffffff" stroke-width="5.5" stroke-linejoin="round" stroke-linecap="round" /><polyline points="472.0,162.0 517.0,151.0 573.0,132.0" fill="none" stroke="#ffffff" stroke-width="5.5" stroke-linejoin="round" stroke-linecap="round" /><polyline points="466.0,104.0 474.0,136.0 485.0,162.0 496.0,190.0 505.0,230.0 520.0,275.0" fill="none" stroke="#ffffff" stroke-width="5.5" stroke-linejoin="round" stroke-linecap="round" /><polyline points="608.0,125.0 625.0,150.0 640.0,175.0 667.0,181.0 700.0,188.0" fill="none" stroke="#ffffff" stroke-width="5.5" stroke-linejoin="round" stroke-linecap="round" /><polyline points="689.0,61.0 745.0,89.0 790.0,80.0" fill="none" stroke="#ffffff" stroke-width="5.5" stroke-linejoin="round" stroke-linecap="round" /><polyline points="210.0,233.0 235.0,240.0" fill="none" stroke="#ffffff" stroke-width="5.5" stroke-linejoin="round" stroke-linecap="round" /><polyline points="60.0,384.0 124.0,365.0 178.0,354.0 232.0,328.0 275.0,324.0 318.0,328.0 361.0,345.0 404.0,362.0 420.0,372.0" fill="none" stroke="#ffffff" stroke-width="5.5" stroke-linejoin="round" stroke-linecap="round" /><polyline points="60.0,343.0 110.0,365.0 170.0,383.0 267.0,417.0 327.0,440.0" fill="none" stroke="#ffffff" stroke-width="5.5" stroke-linejoin="round" stroke-linecap="round" /><polyline points="285.0,225.0 292.0,268.0 300.0,311.0 313.0,345.0 326.0,394.0 335.0,430.0" fill="none" stroke="#ffffff" stroke-width="5.5" stroke-linejoin="round" stroke-linecap="round" /><polyline points="337.0,225.0 348.0,268.0 365.0,332.0 378.0,394.0 390.0,440.0" fill="none" stroke="#ffffff" stroke-width="5.5" stroke-linejoin="round" stroke-linecap="round" /><polyline points="410.0,225.0 425.0,255.0 440.0,290.0 455.0,320.0" fill="none" stroke="#ffffff" stroke-width="5.5" stroke-linejoin="round" stroke-linecap="round" /><polyline points="599.0,264.0 625.0,300.0 674.0,337.0 732.0,375.0 790.0,400.0" fill="none" stroke="#ffffff" stroke-width="5.5" stroke-linejoin="round" stroke-linecap="round" /><polyline points="625.0,307.0 676.0,277.0 721.0,251.0 790.0,224.0" fill="none" stroke="#ffffff" stroke-width="5.5" stroke-linejoin="round" stroke-linecap="round" /><polyline points="623.0,225.0 620.0,264.0 625.0,307.0 636.0,354.0 646.0,394.0 660.0,440.0" fill="none" stroke="#ffffff" stroke-width="5.5" stroke-linejoin="round" stroke-linecap="round" /><polyline points="674.0,337.0 711.0,332.0 790.0,312.0" fill="none" stroke="#ffffff" stroke-width="5.5" stroke-linejoin="round" stroke-linecap="round" /><polyline points="674.0,337.0 681.0,375.0 685.0,394.0 690.0,420.0" fill="none" stroke="#ffffff" stroke-width="5.5" stroke-linejoin="round" stroke-linecap="round" /><polyline points="732.0,274.0 754.0,311.0 790.0,368.0" fill="none" stroke="#ffffff" stroke-width="5.5" stroke-linejoin="round" stroke-linecap="round" /><polyline points="465.0,225.0 490.0,260.0" fill="none" stroke="#ffffff" stroke-width="5.5" stroke-linejoin="round" stroke-linecap="round" /><polyline points="440.0,290.0 460.0,330.0 480.0,365.0 500.0,420.0" fill="none" stroke="#ffffff" stroke-width="5.5" stroke-linejoin="round" stroke-linecap="round" /><polyline points="60.0,499.0 142.5,479.0 210.0,459.0 267.5,439.0 322.5,419.0 382.5,396.5 410.0,389.0" fill="none" stroke="#ffffff" stroke-width="5.5" stroke-linejoin="round" stroke-linecap="round" /><polyline points="325.0,389.0 340.0,439.0 352.5,484.0 362.5,514.0 375.0,585.8" fill="none" stroke="#ffffff" stroke-width="5.5" stroke-linejoin="round" stroke-linecap="round" /><polyline points="200.0,529.0 285.0,514.0 360.0,504.0 435.0,489.0 484.5,479.0" fill="none" stroke="#ffffff" stroke-width="5.5" stroke-linejoin="round" stroke-linecap="round" /><polyline points="360.0,389.0 380.0,439.0 397.5,481.5 422.5,519.0 460.0,585.8" fill="none" stroke="#ffffff" stroke-width="5.5" stroke-linejoin="round" stroke-linecap="round" /><polyline points="60.0,429.0 135.0,401.5 195.0,389.0" fill="none" stroke="#ffffff" stroke-width="5.5" stroke-linejoin="round" stroke-linecap="round" /><polyline points="582.5,494.0 640.0,534.0 690.0,585.8" fill="none" stroke="#ffffff" stroke-width="5.5" stroke-linejoin="round" stroke-linecap="round" /><polyline points="560.0,529.0 615.0,506.5 665.0,464.0 715.0,444.0 789.5,414.0" fill="none" stroke="#ffffff" stroke-width="5.5" stroke-linejoin="round" stroke-linecap="round" /><polyline points="687.5,389.0 702.5,439.0 715.0,489.0 727.5,539.0 740.0,585.8" fill="none" stroke="#ffffff" stroke-width="5.5" stroke-linejoin="round" stroke-linecap="round" /><polyline points="740.0,389.0 765.0,426.5 789.5,451.5" fill="none" stroke="#ffffff" stroke-width="5.5" stroke-linejoin="round" stroke-linecap="round" /><polyline points="440.0,389.0 470.0,439.0 495.0,476.5 515.0,514.0 540.0,549.0 565.0,585.8" fill="none" stroke="#ffffff" stroke-width="5.5" stroke-linejoin="round" stroke-linecap="round" /><polyline points="365.0,489.0 427.5,484.0 477.5,476.5 540.0,451.5" fill="none" stroke="#ffffff" stroke-width="5.5" stroke-linejoin="round" stroke-linecap="round" /><polyline points="365.0,419.0 440.0,389.0" fill="none" stroke="#ffffff" stroke-width="5.5" stroke-linejoin="round" stroke-linecap="round" /><polyline points="60.0,600.5 185.0,578.0 260.0,563.0 310.0,553.0 385.0,538.0 435.0,528.0" fill="none" stroke="#ffffff" stroke-width="5.5" stroke-linejoin="round" stroke-linecap="round" /><polyline points="142.5,724.8 185.0,633.0 215.0,600.5 260.0,563.0" fill="none" stroke="#ffffff" stroke-width="5.5" stroke-linejoin="round" stroke-linecap="round" /><polyline points="60.0,690.5 155.0,658.0 235.0,645.5 297.5,638.0" fill="none" stroke="#ffffff" stroke-width="5.5" stroke-linejoin="round" stroke-linecap="round" /><polyline points="85.0,724.8 210.0,688.0 297.5,658.0 385.0,635.5 484.5,610.5" fill="none" stroke="#ffffff" stroke-width="5.5" stroke-linejoin="round" stroke-linecap="round" /><polyline points="192.5,628.0 205.0,665.5 215.0,724.8" fill="none" stroke="#ffffff" stroke-width="5.5" stroke-linejoin="round" stroke-linecap="round" /><polyline points="380.0,528.0 410.0,603.0 435.0,653.0 460.0,724.8" fill="none" stroke="#ffffff" stroke-width="5.5" stroke-linejoin="round" stroke-linecap="round" /><polyline points="310.0,638.0 347.5,724.8" fill="none" stroke="#ffffff" stroke-width="5.5" stroke-linejoin="round" stroke-linecap="round" /><polyline points="410.0,678.0 484.5,640.5" fill="none" stroke="#ffffff" stroke-width="5.5" stroke-linejoin="round" stroke-linecap="round" /><polyline points="505.0,528.0 555.0,570.0 615.0,613.0 652.0,658.0 690.0,725.0" fill="none" stroke="#ffffff" stroke-width="5.5" stroke-linejoin="round" stroke-linecap="round" /><polyline points="627.0,528.0 690.0,578.0 740.0,628.0 790.0,680.0" fill="none" stroke="#ffffff" stroke-width="5.5" stroke-linejoin="round" stroke-linecap="round" /><polyline points="420.0,707.0 447.0,677.0 502.0,606.0 521.0,581.0 546.0,560.0 560.0,545.0" fill="none" stroke="#ffffff" stroke-width="5.5" stroke-linejoin="round" stroke-linecap="round" /><polyline points="435.0,528.0 451.0,560.0 468.0,602.0 483.0,644.0 500.0,686.0 510.0,707.0 516.0,725.0" fill="none" stroke="#ffffff" stroke-width="5.5" stroke-linejoin="round" stroke-linecap="round" /><polyline points="490.0,703.0 510.0,707.0 567.0,677.0 598.0,661.0 620.0,640.0 665.0,603.0 740.0,578.0 790.0,565.0" fill="none" stroke="#ffffff" stroke-width="5.5" stroke-linejoin="round" stroke-linecap="round" /><polyline points="424.0,619.0 445.0,677.0 462.0,725.0" fill="none" stroke="#ffffff" stroke-width="5.5" stroke-linejoin="round" stroke-linecap="round" /><rect x="329" y="96" width="36" height="14" rx="1.5" fill="#fbd54e" stroke="#e9b936" stroke-width="1"/><text x="347.0" y="103.5" font-size="12" fill="#3c3c3c" font-weight="normal" text-anchor="middle" dominant-baseline="central" letter-spacing="0" >D657</text><rect x="315" y="335" width="35" height="14" rx="1.5" fill="#fbd54e" stroke="#e9b936" stroke-width="1"/><text x="332.5" y="342.5" font-size="12" fill="#3c3c3c" font-weight="normal" text-anchor="middle" dominant-baseline="central" letter-spacing="0" >D400</text><rect x="362" y="357" width="32" height="14" rx="1.5" fill="#fbd54e" stroke="#e9b936" stroke-width="1"/><text x="378.0" y="364.5" font-size="12" fill="#3c3c3c" font-weight="normal" text-anchor="middle" dominant-baseline="central" letter-spacing="0" >D400</text><rect x="430" y="327" width="35" height="13" rx="1.5" fill="#fbd54e" stroke="#e9b936" stroke-width="1"/><text x="447.5" y="334.0" font-size="12" fill="#3c3c3c" font-weight="normal" text-anchor="middle" dominant-baseline="central" letter-spacing="0" >D400</text><rect x="112" y="495" width="30" height="14" rx="1.5" fill="#fbd54e" stroke="#e9b936" stroke-width="1"/><text x="127.0" y="502.5" font-size="12" fill="#3c3c3c" font-weight="normal" text-anchor="middle" dominant-baseline="central" letter-spacing="0" >D39</text><rect x="156" y="643" width="29" height="14" rx="1.5" fill="#fbd54e" stroke="#e9b936" stroke-width="1"/><text x="170.5" y="650.5" font-size="12" fill="#3c3c3c" font-weight="normal" text-anchor="middle" dominant-baseline="central" letter-spacing="0" >D92</text><rect x="60" y="691" width="29" height="14" rx="1.5" fill="#fbd54e" stroke="#e9b936" stroke-width="1"/><text x="74.5" y="698.5" font-size="12" fill="#3c3c3c" font-weight="normal" text-anchor="middle" dominant-baseline="central" letter-spacing="0" >D92</text><rect x="495" y="709" width="37" height="14" rx="1.5" fill="#fbd54e" stroke="#e9b936" stroke-width="1"/><text x="513.5" y="716.5" font-size="12" fill="#3c3c3c" font-weight="normal" text-anchor="middle" dominant-baseline="central" letter-spacing="0" >D93A</text><rect x="403" y="228" width="20" height="12" rx="1.5" fill="#fbd54e" stroke="#e9b936" stroke-width="1"/><text x="413.0" y="234.5" font-size="11" fill="#3c3c3c" font-weight="normal" text-anchor="middle" dominant-baseline="central" letter-spacing="0" >D6</text><rect x="56" y="219" width="14" height="15" rx="1.5" fill="#fbd54e" stroke="#e9b936" stroke-width="1"/><text x="63.0" y="227.0" font-size="12" fill="#3c3c3c" font-weight="normal" text-anchor="middle" dominant-baseline="central" letter-spacing="0" >0</text><text x="150.0" y="198.5" font-size="15" fill="#5f6368" font-weight="normal" text-anchor="middle" dominant-baseline="central" letter-spacing="2.3" stroke="#5f6368" stroke-width="0.45">BOUDONVILLE</text><text x="150.0" y="215.5" font-size="15" fill="#5f6368" font-weight="normal" text-anchor="middle" dominant-baseline="central" letter-spacing="2.3" stroke="#5f6368" stroke-width="0.45">- SCARPONE</text><text x="150.0" y="232.5" font-size="15" fill="#5f6368" font-weight="normal" text-anchor="middle" dominant-baseline="central" letter-spacing="2.3" stroke="#5f6368" stroke-width="0.45">- LIBÉRATION</text><text x="279.0" y="435.0" font-size="15" fill="#5f6368" font-weight="normal" text-anchor="middle" dominant-baseline="central" letter-spacing="2.3" stroke="#5f6368" stroke-width="0.45">POINCARÉ -</text><text x="279.0" y="451.5" font-size="15" fill="#5f6368" font-weight="normal" text-anchor="middle" dominant-baseline="central" letter-spacing="2.3" stroke="#5f6368" stroke-width="0.45">FOCH - ANATOLE</text><text x="279.0" y="468.5" font-size="15" fill="#5f6368" font-weight="normal" text-anchor="middle" dominant-baseline="central" letter-spacing="2.3" stroke="#5f6368" stroke-width="0.45">FRANCE -</text><text x="279.0" y="485.0" font-size="15" fill="#5f6368" font-weight="normal" text-anchor="middle" dominant-baseline="central" letter-spacing="2.3" stroke="#5f6368" stroke-width="0.45">CROIX DE</text><text x="279.0" y="503.5" font-size="15" fill="#5f6368" font-weight="normal" text-anchor="middle" dominant-baseline="central" letter-spacing="2.3" stroke="#5f6368" stroke-width="0.45">BOURGOGNE</text><text x="479.0" y="635.5" font-size="15" fill="#5f6368" font-weight="normal" text-anchor="middle" dominant-baseline="central" letter-spacing="2.3" stroke="#5f6368" stroke-width="0.45">SAURUPT</text><text x="351.0" y="724.0" font-size="15" fill="#5f6368" font-weight="normal" text-anchor="middle" dominant-baseline="central" letter-spacing="2.3" stroke="#5f6368" stroke-width="0.45">ARTEM</text><text x="700.0" y="601.0" font-size="15" fill="#5f6368" font-weight="normal" text-anchor="start" dominant-baseline="central" letter-spacing="2.3" stroke="#5f6368" stroke-width="0.45">SAINT-PIERRE</text><text x="716.0" y="619.0" font-size="15" fill="#5f6368" font-weight="normal" text-anchor="start" dominant-baseline="central" letter-spacing="2.3" stroke="#5f6368" stroke-width="0.45">- RENÉ II -</text><text x="700.0" y="636.0" font-size="15" fill="#5f6368" font-weight="normal" text-anchor="start" dominant-baseline="central" letter-spacing="2.3" stroke="#5f6368" stroke-width="0.45">MARCEL BROT</text><text x="78.0" y="79.0" font-size="14.5" fill="#5f6368" font-weight="normal" text-anchor="end" dominant-baseline="central" letter-spacing="0" transform="rotate(-24 78.0 79.0)" stroke="#f2f2f5" stroke-width="2.5" stroke-opacity="0.6" paint-order="stroke">Boulevard</text><text x="237.0" y="103.0" font-size="13" fill="#5f6368" font-weight="normal" text-anchor="middle" dominant-baseline="central" letter-spacing="0" transform="rotate(67 237.0 103.0)" stroke="#f2f2f5" stroke-width="2.5" stroke-opacity="0.6" paint-order="stroke">Bd de Scarpone</text><text x="547.0" y="87.0" font-size="13" fill="#5f6368" font-weight="normal" text-anchor="middle" dominant-baseline="central" letter-spacing="0" transform="rotate(21 547.0 87.0)" stroke="#f2f2f5" stroke-width="2.5" stroke-opacity="0.6" paint-order="stroke">Rue Oberlin</text><text x="625.0" y="106.0" font-size="13" fill="#5f6368" font-weight="normal" text-anchor="middle" dominant-baseline="central" letter-spacing="0" transform="rotate(-24 625.0 106.0)" stroke="#f2f2f5" stroke-width="2.5" stroke-opacity="0.6" paint-order="stroke">Viaduc Louis Marin</text><text x="768.0" y="305.0" font-size="13" fill="#5f6368" font-weight="normal" text-anchor="middle" dominant-baseline="central" letter-spacing="0" transform="rotate(60 768.0 305.0)" stroke="#f2f2f5" stroke-width="2.5" stroke-opacity="0.6" paint-order="stroke">Bd d'Austrasie</text><text x="78.0" y="356.0" font-size="13" fill="#5f6368" font-weight="normal" text-anchor="end" dominant-baseline="central" letter-spacing="0" transform="rotate(20 78.0 356.0)" stroke="#f2f2f5" stroke-width="2.5" stroke-opacity="0.6" paint-order="stroke">Boufflers</text><text x="207.0" y="398.0" font-size="13" fill="#5f6368" font-weight="normal" text-anchor="middle" dominant-baseline="central" letter-spacing="0" transform="rotate(20 207.0 398.0)" stroke="#f2f2f5" stroke-width="2.5" stroke-opacity="0.6" paint-order="stroke">Av. de Boufflers</text><text x="80.0" y="452.0" font-size="13" fill="#5f6368" font-weight="normal" text-anchor="middle" dominant-baseline="central" letter-spacing="0" transform="rotate(-20 80.0 452.0)" stroke="#f2f2f5" stroke-width="2.5" stroke-opacity="0.6" paint-order="stroke">Albert</text><text x="76.0" y="594.0" font-size="13" fill="#5f6368" font-weight="normal" text-anchor="middle" dominant-baseline="central" letter-spacing="0" transform="rotate(62 76.0 594.0)" stroke="#f2f2f5" stroke-width="2.5" stroke-opacity="0.6" paint-order="stroke">chal Foch</text><text x="404.0" y="583.0" font-size="13" fill="#5f6368" font-weight="normal" text-anchor="middle" dominant-baseline="central" letter-spacing="0" transform="rotate(63 404.0 583.0)" stroke="#f2f2f5" stroke-width="2.5" stroke-opacity="0.6" paint-order="stroke">Rue Jeanne d'Arc</text><text x="452.0" y="573.0" font-size="13" fill="#5f6368" font-weight="normal" text-anchor="middle" dominant-baseline="central" letter-spacing="0" transform="rotate(64 452.0 573.0)" stroke="#f2f2f5" stroke-width="2.5" stroke-opacity="0.6" paint-order="stroke">Bd Jean Jaurès</text><text x="171.0" y="664.0" font-size="13" fill="#5f6368" font-weight="normal" text-anchor="start" dominant-baseline="central" letter-spacing="0" transform="rotate(62 171.0 664.0)" stroke="#f2f2f5" stroke-width="2.5" stroke-opacity="0.6" paint-order="stroke">Bd de Baudricourt</text><text x="123.0" y="684.0" font-size="13" fill="#5f6368" font-weight="normal" text-anchor="start" dominant-baseline="central" letter-spacing="0" transform="rotate(62 123.0 684.0)" stroke="#f2f2f5" stroke-width="2.5" stroke-opacity="0.6" paint-order="stroke">Bd Dr Castex</text><text x="655.0" y="677.0" font-size="13" fill="#5f6368" font-weight="normal" text-anchor="middle" dominant-baseline="central" letter-spacing="0" transform="rotate(63 655.0 677.0)" stroke="#f2f2f5" stroke-width="2.5" stroke-opacity="0.6" paint-order="stroke">Quai de la Bataille</text><text x="728.0" y="498.0" font-size="13" fill="#5f6368" font-weight="normal" text-anchor="middle" dominant-baseline="central" letter-spacing="0" transform="rotate(72 728.0 498.0)" stroke="#f2f2f5" stroke-width="2.5" stroke-opacity="0.6" paint-order="stroke">Bd Lobau</text><text x="535.0" y="398.0" font-size="13" fill="#5f6368" font-weight="normal" text-anchor="middle" dominant-baseline="central" letter-spacing="0" transform="rotate(70 535.0 398.0)" stroke="#f2f2f5" stroke-width="2.5" stroke-opacity="0.6" paint-order="stroke">rue Saint-Dizier</text><text x="711.0" y="138.0" font-size="15" fill="#2f63c2" font-weight="normal" text-anchor="middle" dominant-baseline="central" letter-spacing="0" transform="rotate(43 711.0 138.0)" stroke="#9ebff5" stroke-width="0">La Meurthe</text><text x="765.0" y="137.0" font-size="15" fill="#2f63c2" font-weight="normal" text-anchor="start" dominant-baseline="central" letter-spacing="0" transform="rotate(27 765.0 137.0)" dx="-28">La Meurthe</text><text x="265.0" y="262.5" font-size="17" fill="#6a7b86" font-weight="normal" text-anchor="middle" dominant-baseline="central" letter-spacing="0" stroke="#f2f2f5" stroke-width="2.5" stroke-opacity="0.6" paint-order="stroke">Campus</text><text x="265.0" y="281.0" font-size="17" fill="#6a7b86" font-weight="normal" text-anchor="middle" dominant-baseline="central" letter-spacing="0" stroke="#f2f2f5" stroke-width="2.5" stroke-opacity="0.6" paint-order="stroke">Lettres et</text><text x="265.0" y="299.5" font-size="17" fill="#6a7b86" font-weight="normal" text-anchor="middle" dominant-baseline="central" letter-spacing="0" stroke="#f2f2f5" stroke-width="2.5" stroke-opacity="0.6" paint-order="stroke">Sciences</text><text x="265.0" y="318.0" font-size="17" fill="#6a7b86" font-weight="normal" text-anchor="middle" dominant-baseline="central" letter-spacing="0" stroke="#f2f2f5" stroke-width="2.5" stroke-opacity="0.6" paint-order="stroke">Humaines...</text><text x="60.0" y="282.0" font-size="17" fill="#2f9a55" font-weight="normal" text-anchor="start" dominant-baseline="central" letter-spacing="0" stroke="#f2f2f5" stroke-width="2.5" stroke-opacity="0.6" paint-order="stroke">la Cure d'Air</text><text x="422.0" y="254.0" font-size="17.5" fill="#6a7b86" font-weight="normal" text-anchor="middle" dominant-baseline="central" letter-spacing="0" stroke="#f2f2f5" stroke-width="2.5" stroke-opacity="0.6" paint-order="stroke">Basilique Saint-Epvre</text><text x="387.0" y="277.0" font-size="18.5" fill="#1a8a97" font-weight="normal" text-anchor="start" dominant-baseline="central" letter-spacing="0" stroke="#f2f2f5" stroke-width="2.5" stroke-opacity="0.6" paint-order="stroke">Place Stanislas</text><text x="549.0" y="193.0" font-size="18.5" fill="#23814a" font-weight="normal" text-anchor="middle" dominant-baseline="central" letter-spacing="0" stroke="#23814a" stroke-width="0.6">Parc de la</text><text x="549.0" y="211.5" font-size="18.5" fill="#23814a" font-weight="normal" text-anchor="middle" dominant-baseline="central" letter-spacing="0" stroke="#23814a" stroke-width="0.6">Pépinière</text><text x="621.0" y="237.5" font-size="18.5" fill="#1a8a97" font-weight="normal" text-anchor="start" dominant-baseline="central" letter-spacing="0" stroke="#1a8a97" stroke-width="0.5">Muséum-Aquarium</text><text x="621.0" y="256.0" font-size="18.5" fill="#1a8a97" font-weight="normal" text-anchor="start" dominant-baseline="central" letter-spacing="0" stroke="#1a8a97" stroke-width="0.5">de Nancy</text><text x="253.0" y="570.0" font-size="18" fill="#1a8a97" font-weight="normal" text-anchor="end" dominant-baseline="central" letter-spacing="0" stroke="#f2f2f5" stroke-width="2.5" stroke-opacity="0.6" paint-order="stroke">Musée de l'École</text><text x="253.0" y="588.0" font-size="18" fill="#1a8a97" font-weight="normal" text-anchor="end" dominant-baseline="central" letter-spacing="0" stroke="#f2f2f5" stroke-width="2.5" stroke-opacity="0.6" paint-order="stroke">de Nancy</text><text x="0" y="0" font-size="29" font-weight="bold" fill="#202124" transform="translate(582,339) scale(0.8,1)" text-anchor="end">Nancy</text><text x="88.5" y="517.8" font-size="21.5" fill="#202124" text-anchor="end" stroke="#fff" stroke-width="2.5" stroke-opacity="0.8" paint-order="stroke">Laxou</text><text x="786.0" y="228.0" font-size="17" fill="#2e8b55" font-weight="normal" text-anchor="start" dominant-baseline="central" letter-spacing="0" stroke="#f2f2f5" stroke-width="2.5" stroke-opacity="0.6" paint-order="stroke">S</text><path d="M265,247 C261,239 252,232 252,224 A13 13 0 1 1 278,224 C278,232 269,239 265,247 Z" fill="#7b8d9a" stroke="#fff" stroke-width="1.2"/><path d="M256,222 L265,217.5 L274,222 L265,226.5 Z" fill="#fff"/><path d="M259.5,224.5 V229 Q265,232.5 270.5,229 V224.5 L265,227.3 Z" fill="#fff"/><path d="M273,222.5 V228" stroke="#fff" stroke-width="1"/><path d="M172,299 C168,291 159,284 159,276 A13 13 0 1 1 185,276 C185,284 176,291 172,299 Z" fill="#35a05a" stroke="#fff" stroke-width="1.2"/><path d="M172,268 L166,278 H169 L164,286 H180 L175,278 H178 Z M171,286 H173 V290 H171Z" fill="#fff"/><path d="M478,240 C474,232 465,225 465,217 A13 13 0 1 1 491,217 C491,225 482,232 478,240 Z" fill="#7b8d9a" stroke="#fff" stroke-width="1.2"/><path d="M476.5,206 H479.5 V212 H485 V215 H479.5 V229 H476.5 V215 H471 V212 H476.5 Z" fill="#fff"/><path d="M528,295 C524,287 515,280 515,272 A13 13 0 1 1 541,272 C541,280 532,287 528,295 Z" fill="#1e9fb5" stroke="#fff" stroke-width="1.2"/><rect x="521" y="265" width="14" height="10" rx="1" fill="#fff"/><circle cx="528" cy="270" r="2.5" fill="#1e9fb5"/><path d="M604,264 C600,256 591,249 591,241 A13 13 0 1 1 617,241 C617,249 608,256 604,264 Z" fill="#1e9fb5" stroke="#fff" stroke-width="1.2"/><path d="M596,237 L604,232 L612,237 Z M597,238 H611 V240 H597Z M598,241 H610 V248 H598Z" fill="#fff"/><text x="604" y="247" font-size="7" fill="#1e9fb5" text-anchor="middle">M</text><path d="M270,596 C266,588 257,581 257,573 A13 13 0 1 1 283,573 C283,581 274,588 270,596 Z" fill="#1e9fb5" stroke="#fff" stroke-width="1.2"/><path d="M263,570 L270,566 L277,570 Z M264,571 H276 V579 H264Z" fill="#fff"/><rect x="386" y="374" width="16" height="16" rx="2" fill="#1a73e8"/><rect x="390" y="377" width="8" height="8" rx="1.5" fill="#fff"/><rect x="391" y="379" width="6" height="3" fill="#1a73e8"/><rect x="390" y="385" width="2" height="2" fill="#fff"/><rect x="396" y="385" width="2" height="2" fill="#fff"/><rect x="403" y="403" width="16" height="16" rx="2" fill="#1a73e8"/><rect x="407" y="406" width="8" height="8" rx="1.5" fill="#fff"/><rect x="408" y="408" width="6" height="3" fill="#1a73e8"/><rect x="407" y="414" width="2" height="2" fill="#fff"/><rect x="413" y="414" width="2" height="2" fill="#fff"/><rect x="421" y="401" width="16" height="16" rx="2" fill="#1a73e8"/><rect x="425" y="404" width="8" height="8" rx="1.5" fill="#fff"/><rect x="426" y="406" width="6" height="3" fill="#1a73e8"/><rect x="425" y="412" width="2" height="2" fill="#fff"/><rect x="431" y="412" width="2" height="2" fill="#fff"/><polyline points="398.5,170.0 396.0,184.0 394.0,197.0 404.0,197.0 402.0,184.0 396.0,184.0" fill="none" stroke="#4b6de6" stroke-width="3" stroke-linejoin="round" stroke-linecap="round" stroke-linecap="butt"/><polyline points="396.0,184.0 375.0,189.0 265.0,238.0" fill="none" stroke="#4b6de6" stroke-width="3" stroke-linejoin="round" stroke-linecap="round" stroke-linecap="butt"/><polyline points="403.0,197.0 413.0,221.0 430.0,248.0 450.0,294.0 460.0,323.0" fill="none" stroke="#4b6de6" stroke-width="3" stroke-linejoin="round" stroke-linecap="round" stroke-linecap="butt"/><polyline points="250.0,258.0 253.0,288.0 260.0,305.0 292.0,318.0 323.0,390.0" fill="none" stroke="#4b6de6" stroke-width="3" stroke-linejoin="round" stroke-linecap="round" stroke-linecap="butt"/><polyline points="460.0,307.0 427.0,320.0 407.0,347.0 404.0,364.0 421.0,384.0 424.0,402.0" fill="none" stroke="#4b6de6" stroke-width="3" stroke-linejoin="round" stroke-linecap="round" stroke-linecap="butt"/><polyline points="454.0,308.0 434.0,316.0" fill="none" stroke="#4b6de6" stroke-width="3" stroke-linejoin="round" stroke-linecap="round" stroke-linecap="butt"/><polyline points="264.0,417.0 320.0,390.0 393.0,362.0 443.0,337.0 463.0,330.0" fill="none" stroke="#a681e0" stroke-width="3" stroke-linejoin="round" stroke-linecap="round" stroke-linecap="butt"/><polyline points="266.0,417.0 270.0,460.0 280.0,477.0 265.0,503.0 270.0,533.0 262.0,556.0" fill="none" stroke="#a681e0" stroke-width="3" stroke-linejoin="round" stroke-linecap="round" stroke-linecap="butt"/><polyline points="307.0,553.0 293.0,487.0 290.0,457.0 327.0,433.0 420.0,393.0 427.0,410.0 447.0,418.0 475.0,405.0 467.0,360.0" fill="none" stroke="#a681e0" stroke-width="3" stroke-linejoin="round" stroke-linecap="round" stroke-linecap="butt"/><polyline points="429.0,300.0 436.0,318.0 445.0,334.0" fill="none" stroke="#a681e0" stroke-width="3" stroke-linejoin="round" stroke-linecap="round" stroke-linecap="butt"/><polyline points="422.0,286.0 440.0,280.0" fill="none" stroke="#a681e0" stroke-width="3" stroke-linejoin="round" stroke-linecap="round" stroke-linecap="butt"/><polyline points="422.0,286.0 434.0,318.0" fill="none" stroke="#a681e0" stroke-width="3" stroke-linejoin="round" stroke-linecap="round" stroke-linecap="butt"/><polyline points="455.0,383.0 460.0,402.0 476.0,402.0 463.0,332.0" fill="none" stroke="#a681e0" stroke-width="3" stroke-linejoin="round" stroke-linecap="round" stroke-linecap="butt"/><polyline points="290.0,588.0 300.0,586.0" fill="none" stroke="#a681e0" stroke-width="3" stroke-linejoin="round" stroke-linecap="round" stroke-linecap="butt"/><polyline points="262.0,555.0 273.0,593.0 300.0,656.0 410.0,620.0 427.0,610.0 490.0,583.0 503.0,605.0 522.0,581.0 557.0,530.0" fill="none" stroke="#6ed6a4" stroke-width="3" stroke-linejoin="round" stroke-linecap="round" stroke-linecap="butt"/><polyline points="263.0,557.0 303.0,547.0 377.0,530.0 474.0,497.0 481.0,486.0 539.0,458.0 560.0,450.0 557.0,430.0" fill="none" stroke="#6ed6a4" stroke-width="3" stroke-linejoin="round" stroke-linecap="round" stroke-linecap="butt"/><polyline points="533.0,380.0 546.0,372.0 563.5,402.5 526.0,420.0 539.0,458.0 554.0,484.0" fill="none" stroke="#6ed6a4" stroke-width="3" stroke-linejoin="round" stroke-linecap="round" stroke-linecap="butt"/><polyline points="262.0,555.0 300.0,552.0" fill="none" stroke="#6ed6a4" stroke-width="3" stroke-linejoin="round" stroke-linecap="round" stroke-linecap="butt"/><polyline points="270.0,592.0 295.0,587.0" fill="none" stroke="#6ed6a4" stroke-width="3" stroke-linejoin="round" stroke-linecap="round" stroke-linecap="butt"/><polyline points="454.0,296.0 455.0,305.0 464.5,324.5 495.0,316.0 483.0,293.0 455.0,305.0" fill="none" stroke="#6ed6a4" stroke-width="3" stroke-linejoin="round" stroke-linecap="round" stroke-linecap="butt"/><polyline points="476.5,321.5 479.0,330.0 499.0,324.5 496.0,316.0" fill="none" stroke="#6ed6a4" stroke-width="3" stroke-linejoin="round" stroke-linecap="round" stroke-linecap="butt"/><polyline points="495.0,313.5 524.0,308.0" fill="none" stroke="#6ed6a4" stroke-width="3" stroke-linejoin="round" stroke-linecap="round" stroke-linecap="butt"/><path d="M399.2,171.8 C394.2,164.8 384.2,157.8 384.2,148.8 A15 15 0 1 1 414.2,148.8 C414.2,157.8 404.2,164.8 399.2,171.8 Z" fill="#4b6ee8" stroke="#151515" stroke-width="1.6"/><text x="399.2" y="158.3" font-size="21" fill="#fff" font-weight="normal" text-anchor="middle" stroke="#fff" stroke-width="0.8">5</text><path d="M396.7,148.9 C391.7,141.9 381.7,134.9 381.7,125.9 A15 15 0 1 1 411.7,125.9 C411.7,134.9 401.7,141.9 396.7,148.9 Z" fill="#4b6ee8" stroke="#151515" stroke-width="1.6"/><text x="396.7" y="135.4" font-size="21" fill="#fff" font-weight="normal" text-anchor="middle" stroke="#fff" stroke-width="0.8">8</text><path d="M250,260 C245,253 235,246 235,237 A15 15 0 1 1 265,237 C265,246 255,253 250,260 Z" fill="#4b6ee8" stroke="#151515" stroke-width="1.6"/><text x="250" y="246.5" font-size="21" fill="#fff" font-weight="normal" text-anchor="middle" stroke="#fff" stroke-width="0.8">10</text><path d="M285,312.7 C280,305.7 270,298.7 270,289.7 A15 15 0 1 1 300,289.7 C300,298.7 290,305.7 285,312.7 Z" fill="#4b6ee8" stroke="#151515" stroke-width="1.6"/><text x="285" y="299.2" font-size="21" fill="#fff" font-weight="normal" text-anchor="middle" stroke="#fff" stroke-width="0.8">11</text><path d="M444,265 C439,258 429,251 429,242 A15 15 0 1 1 459,242 C459,251 449,258 444,265 Z" fill="#4b6ee8" stroke="#151515" stroke-width="1.6"/><path d="M439,261.5 C434,254.5 424,247.5 424,238.5 A15 15 0 1 1 454,238.5 C454,247.5 444,254.5 439,261.5 Z" fill="#4b6ee8" stroke="#151515" stroke-width="1.6"/><text x="439" y="248.0" font-size="21" fill="#fff" font-weight="normal" text-anchor="middle" stroke="#fff" stroke-width="0.8">2</text><path d="M455.5,293 C450.5,286 440.5,279 440.5,270 A15 15 0 1 1 470.5,270 C470.5,279 460.5,286 455.5,293 Z" fill="#ad85e6" stroke="#151515" stroke-width="1.6"/><path d="M417.6,387.5 C412.6,380.5 402.6,373.5 402.6,364.5 A15 15 0 1 1 432.6,364.5 C432.6,373.5 422.6,380.5 417.6,387.5 Z" fill="#ad85e6" stroke="#151515" stroke-width="1.6"/><text x="417.6" y="374.0" font-size="21" fill="#fff" font-weight="normal" text-anchor="middle" stroke="#fff" stroke-width="0.8">3</text><path d="M455,383 C450,376 440,369 440,360 A15 15 0 1 1 470,360 C470,369 460,376 455,383 Z" fill="#ad85e6" stroke="#151515" stroke-width="1.6"/><path d="M461.7,386.9 C456.7,379.9 446.7,372.9 446.7,363.9 A15 15 0 1 1 476.7,363.9 C476.7,372.9 466.7,379.9 461.7,386.9 Z" fill="#ad85e6" stroke="#151515" stroke-width="1.6"/><path d="M473.3,384.3 C468.3,377.3 458.3,370.3 458.3,361.3 A15 15 0 1 1 488.3,361.3 C488.3,370.3 478.3,377.3 473.3,384.3 Z" fill="#ad85e6" stroke="#151515" stroke-width="1.6"/><path d="M468,376.5 C463,369.5 453,362.5 453,353.5 A15 15 0 1 1 483,353.5 C483,362.5 473,369.5 468,376.5 Z" fill="#ad85e6" stroke="#151515" stroke-width="1.6"/><text x="468" y="363.0" font-size="21" fill="#fff" font-weight="normal" text-anchor="middle" stroke="#fff" stroke-width="0.8">8</text><path d="M487.6,367.4 C482.6,360.4 472.6,353.4 472.6,344.4 A15 15 0 1 1 502.6,344.4 C502.6,353.4 492.6,360.4 487.6,367.4 Z" fill="#ad85e6" stroke="#151515" stroke-width="1.6"/><text x="487.6" y="353.9" font-size="21" fill="#fff" font-weight="normal" text-anchor="middle" stroke="#fff" stroke-width="0.8">11</text><path d="M303.3,581.3 C298.3,574.3 288.3,567.3 288.3,558.3 A15 15 0 1 1 318.3,558.3 C318.3,567.3 308.3,574.3 303.3,581.3 Z" fill="#ad85e6" stroke="#151515" stroke-width="1.6"/><text x="303.3" y="567.8" font-size="21" fill="#fff" font-weight="normal" text-anchor="middle" stroke="#fff" stroke-width="0.8">1</text><path d="M460,305 C455,298 445,291 445,282 A15 15 0 1 1 475,282 C475,291 465,298 460,305 Z" fill="#6fd8a6" stroke="#151515" stroke-width="1.6"/><text x="460" y="291.5" font-size="21" fill="#fff" font-weight="normal" text-anchor="middle" stroke="#fff" stroke-width="0.8">6</text><path d="M500.5,303.5 C495.5,296.5 485.5,289.5 485.5,280.5 A15 15 0 1 1 515.5,280.5 C515.5,289.5 505.5,296.5 500.5,303.5 Z" fill="#6fd8a6" stroke="#151515" stroke-width="1.6"/><path d="M506.5,302 C501.5,295 491.5,288 491.5,279 A15 15 0 1 1 521.5,279 C521.5,288 511.5,295 506.5,302 Z" fill="#6fd8a6" stroke="#151515" stroke-width="1.6"/><path d="M512.5,298 C507.5,291 497.5,284 497.5,275 A15 15 0 1 1 527.5,275 C527.5,284 517.5,291 512.5,298 Z" fill="#6fd8a6" stroke="#151515" stroke-width="1.6"/><text x="512.5" y="284.5" font-size="21" fill="#fff" font-weight="normal" text-anchor="middle" stroke="#fff" stroke-width="0.8">10</text><path d="M505.7,368.7 C500.7,361.7 490.7,354.7 490.7,345.7 A15 15 0 1 1 520.7,345.7 C520.7,354.7 510.7,361.7 505.7,368.7 Z" fill="#6fd8a6" stroke="#151515" stroke-width="1.6"/><path d="M508,366 C503,359 493,352 493,343 A15 15 0 1 1 523,343 C523,352 513,359 508,366 Z" fill="#6fd8a6" stroke="#151515" stroke-width="1.6"/><path d="M520,357 C515,350 505,343 505,334 A15 15 0 1 1 535,334 C535,343 525,350 520,357 Z" fill="#6fd8a6" stroke="#151515" stroke-width="1.6"/><text x="520" y="343.5" font-size="21" fill="#fff" font-weight="normal" text-anchor="middle" stroke="#fff" stroke-width="0.8">5</text><path d="M532.3,350 C527.3,343 517.3,336 517.3,327 A15 15 0 1 1 547.3,327 C547.3,336 537.3,343 532.3,350 Z" fill="#6fd8a6" stroke="#151515" stroke-width="1.6"/><text x="532.3" y="336.5" font-size="21" fill="#fff" font-weight="normal" text-anchor="middle" stroke="#fff" stroke-width="0.8">11</text><path d="M533.6,382.3 C528.6,375.3 518.6,368.3 518.6,359.3 A15 15 0 1 1 548.6,359.3 C548.6,368.3 538.6,375.3 533.6,382.3 Z" fill="#6fd8a6" stroke="#151515" stroke-width="1.6"/><text x="533.6" y="368.8" font-size="21" fill="#fff" font-weight="normal" text-anchor="middle" stroke="#fff" stroke-width="0.8">1</text><path d="M573,504 C568,497 558,490 558,481 A15 15 0 1 1 588,481 C588,490 578,497 573,504 Z" fill="#6fd8a6" stroke="#151515" stroke-width="1.6"/><path d="M570,514 C565,507 555,500 555,491 A15 15 0 1 1 585,491 C585,500 575,507 570,514 Z" fill="#6fd8a6" stroke="#151515" stroke-width="1.6"/><text x="570" y="500.5" font-size="21" fill="#fff" font-weight="normal" text-anchor="middle" stroke="#fff" stroke-width="0.8">14</text><path d="M553.6,528.6 C548.6,521.6 538.6,514.6 538.6,505.6 A15 15 0 1 1 568.6,505.6 C568.6,514.6 558.6,521.6 553.6,528.6 Z" fill="#6fd8a6" stroke="#151515" stroke-width="1.6"/><text x="553.6" y="515.1" font-size="21" fill="#fff" font-weight="normal" text-anchor="middle" stroke="#fff" stroke-width="0.8">16</text><path d="M520.7,583 C515.7,576 505.70000000000005,569 505.70000000000005,560 A15 15 0 1 1 535.7,560 C535.7,569 525.7,576 520.7,583 Z" fill="#6fd8a6" stroke="#151515" stroke-width="1.6"/><text x="520.7" y="569.5" font-size="21" fill="#fff" font-weight="normal" text-anchor="middle" stroke="#fff" stroke-width="0.8">17</text><polygon points="272.0,560.0 287.0,551.0 302.0,560.0 302.0,577.0 287.0,585.0 272.0,577.0" fill="#2f55d4"/><path d="M287,577 C285,572 281,568 281,564 A6 6 0 1 1 293,564 C293,568 289,572 287,577 Z" fill="#fff"/><circle cx="287" cy="564" r="2.4" fill="#2f55d4"/><rect x="725" y="515" width="52" height="105" rx="2" fill="#fff"/><rect x="737" y="539" width="25" height="4.5" fill="#666"/><rect x="747.2" y="528.8" width="4.6" height="25" fill="#666"/><rect x="731" y="567.5" width="39" height="1" fill="#e6e6e6"/><rect x="737" y="592" width="25" height="4.5" fill="#666"/><polyline points="743.0,728.0 792.0,690.0" fill="none" stroke="#f5c85a" stroke-width="6" stroke-linejoin="round" stroke-linecap="round" /></svg></div>
  <div id="panel"></div>
  <div id="toggle"><svg width="42" height="64"><path d="M17.4 20.6 L17.4 43.4 L28.6 32 Z" fill="none" stroke="#fff" stroke-width="2" stroke-linejoin="miter"/></svg></div>
  <div id="pill">
    <svg class="abs" style="left:29px;top:10px" width="13" height="14" viewBox="0 0 13 14"><path d="M1 1.2 H12 L7.6 6.8 V12.8 L5.4 11.6 V6.8 Z" fill="none" stroke="#555" stroke-width="1.3" stroke-linejoin="round"/></svg>
    <div class="t">Show display options</div>
  </div>
  <div id="hdr">
    <div class="cb" style="left:38px;top:10px"><svg width="23" height="23"><path d="M3.6 12.4 L9.6 17.8 L19.6 6.4" fill="none" stroke="#fff" stroke-width="2.4"/></svg></div>
    <div class="t">Deliverymen out of sector</div>
    <svg class="abs" style="left:783px;top:11.5px" width="16" height="12"><path d="M1.5 9.5 L8 3 L14.5 9.5" fill="none" stroke="#fff" stroke-width="2.2"/></svg>
  </div>
<div class="dcard" style="top:109px">
  <div class="h">
    <div class="cb" style="left:15px;top:14px"><svg width="23" height="23"><path d="M4 12.2 L9.6 17.4 L19.4 6.2" fill="none" stroke="#fff" stroke-width="2.3"/></svg></div>
    <div class="dot" style="background:#6fdca2"></div>
    <svg class="more" width="18" height="4"><circle cx="2" cy="2" r="1.4" fill="#111"/><circle cx="9" cy="2" r="1.4" fill="#111"/><circle cx="16" cy="2" r="1.4" fill="#111"/></svg>
  </div>
</div>
<div class="dcard" style="top:231px">
  <div class="h">
    <div class="cb" style="left:15px;top:14px"><svg width="23" height="23"><path d="M4 12.2 L9.6 17.4 L19.4 6.2" fill="none" stroke="#fff" stroke-width="2.3"/></svg></div>
    <div class="dot" style="background:#b085e6"></div>
    <svg class="more" width="18" height="4"><circle cx="2" cy="2" r="1.4" fill="#111"/><circle cx="9" cy="2" r="1.4" fill="#111"/><circle cx="16" cy="2" r="1.4" fill="#111"/></svg>
  </div>
</div>
<div class="dcard" style="top:353px">
  <div class="h">
    <div class="cb" style="left:15px;top:14px"><svg width="23" height="23"><path d="M4 12.2 L9.6 17.4 L19.4 6.2" fill="none" stroke="#fff" stroke-width="2.3"/></svg></div>
    <div class="dot" style="background:#5470f0"></div>
    <svg class="more" width="18" height="4"><circle cx="2" cy="2" r="1.4" fill="#111"/><circle cx="9" cy="2" r="1.4" fill="#111"/><circle cx="16" cy="2" r="1.4" fill="#111"/></svg>
  </div>
</div>

</div>
<div id="overlay" class="abs" style="left:0;top:0;width:1700px;height:787px;pointer-events:none"><svg class="abs" style="left:0;top:0" width="1700" height="787" viewBox="0 0 1700 787"><text x="892.2" y="203" font-size="16" fill="#222" textLength="226.4" lengthAdjust="spacingAndGlyphs">Julia Fernandez | AS-987-WX</text><text x="849.0" y="256.7" font-size="13" fill="#5c5c5c" textLength="53.5" lengthAdjust="spacingAndGlyphs">8:00 AM</text><text x="967.4" y="256.7" font-size="13" fill="#5c5c5c" textLength="51.7" lengthAdjust="spacingAndGlyphs">4:29 PM</text><text x="1087.6" y="256.7" font-size="13" fill="#5c5c5c" textLength="51.7" lengthAdjust="spacingAndGlyphs">6.87 km</text><text x="1224.4" y="256.7" font-size="13" fill="#5c5c5c" textLength="13.1" lengthAdjust="spacingAndGlyphs">17</text><text x="1328.3" y="256.7" font-size="13" fill="#5c5c5c" textLength="40.2" lengthAdjust="spacingAndGlyphs">14min</text><text x="1451.6" y="256.7" font-size="13" fill="#5c5c5c" textLength="29.1" lengthAdjust="spacingAndGlyphs">8h15</text><text x="1560.9" y="256.7" font-size="13" fill="#5c5c5c" textLength="45.6" lengthAdjust="spacingAndGlyphs">€192.81</text></svg><div class="abs" style="left:826.0px;top:242.0px"><svg width="19" height="21" viewBox="0 0 19 21"><path d="M1.8 20.5 V1.2 H10.5 V11.2 H1.8 M10.5 4.2 H18.2 V14.2 H10.5 V11.2" fill="none" stroke="#5a5a5a" stroke-width="1.6"/></svg></div><div class="abs" style="left:944.8px;top:241.0px"><svg width="19" height="20" viewBox="0 0 19 20"><path d="M1.6 19.6 V1" stroke="#5a5a5a" stroke-width="1.6"/><rect x="1" y="0.5" width="17.4" height="12.6" fill="#5a5a5a"/><rect x="2.4" y="1.9" width="2.6" height="2.6" fill="#fff"/><rect x="7.6" y="1.9" width="2.6" height="2.6" fill="#fff"/><rect x="12.8" y="1.9" width="2.6" height="2.6" fill="#fff"/><rect x="5.0" y="4.5" width="2.6" height="2.6" fill="#fff"/><rect x="10.2" y="4.5" width="2.6" height="2.6" fill="#fff"/><rect x="15.4" y="4.5" width="2.6" height="2.6" fill="#fff"/><rect x="2.4" y="7.1" width="2.6" height="2.6" fill="#fff"/><rect x="7.6" y="7.1" width="2.6" height="2.6" fill="#fff"/><rect x="12.8" y="7.1" width="2.6" height="2.6" fill="#fff"/><rect x="5.0" y="9.7" width="2.6" height="2.6" fill="#fff"/><rect x="10.2" y="9.7" width="2.6" height="2.6" fill="#fff"/><rect x="15.4" y="9.7" width="2.6" height="2.6" fill="#fff"/></svg></div><div class="abs" style="left:1056.0px;top:243.2px"><svg width="26" height="17" viewBox="0 0 26 17"><path d="M4.8 1 H20.9 L24.9 16 H1 Z" fill="none" stroke="#5a5a5a" stroke-width="1.7" stroke-linejoin="round"/><path d="M12.8 1.5 V16" stroke="#5a5a5a" stroke-width="1.5" stroke-dasharray="2.2 1.6"/></svg></div><div class="abs" style="left:1198.4px;top:240.7px"><svg width="16" height="22" viewBox="0 0 16 22"><path d="M8 21 L2.2 10.8 C1 8.6 1 7.6 1 7.2 C1 3.3 4.1 0.9 8 0.9 C11.9 0.9 15 3.3 15 7.2 C15 7.6 15 8.6 13.8 10.8 Z" fill="none" stroke="#5a5a5a" stroke-width="1.6" stroke-linejoin="round"/><circle cx="7.8" cy="7" r="1.5" fill="#5a5a5a"/></svg></div><div class="abs" style="left:1299.9px;top:243.0px"><svg width="22" height="17" viewBox="0 0 22 17"><path d="M3 6.2 L4.5 1.2 H17.6 L19.1 6.2" fill="none" stroke="#5a5a5a" stroke-width="1.6" stroke-linejoin="round"/><path d="M0.3 6.2 H21.7" stroke="#5a5a5a" stroke-width="1.6"/><path d="M1.8 6.2 V15.2 H20.2 V6.2" fill="none" stroke="#5a5a5a" stroke-width="1.6"/><circle cx="4.7" cy="9.6" r="0.9" fill="#5a5a5a"/><circle cx="16.9" cy="9.6" r="0.9" fill="#5a5a5a"/><path d="M7.4 12.6 L8.2 11.4 H13.6 L14.4 12.6" fill="none" stroke="#5a5a5a" stroke-width="1.4"/><path d="M1.8 15.2 V16.4 H4.6 V15.2 M17.4 15.2 V16.4 H20.2 V15.2" fill="none" stroke="#5a5a5a" stroke-width="1.4"/></svg></div><div class="abs" style="left:1424.4px;top:242.6px"><svg width="18" height="19" viewBox="0 0 18 19"><circle cx="9" cy="6" r="5.2" fill="none" stroke="#5a5a5a" stroke-width="1.6"/><path d="M1.2 17.8 C2 12.6 5.2 10.9 9 10.9 C12.8 10.9 16 12.6 16.8 17.8" fill="none" stroke="#5a5a5a" stroke-width="1.6"/></svg></div><div class="abs" style="left:1530.3px;top:244.0px"><svg width="24" height="15" viewBox="0 0 24 15"><rect x="1" y="1" width="21.6" height="12.6" fill="none" stroke="#5a5a5a" stroke-width="1.7"/><circle cx="5.5" cy="7.2" r="0.9" fill="#5a5a5a"/><circle cx="18" cy="7.2" r="0.9" fill="#5a5a5a"/><path d="M10.4 5.3 L12 3.9 V10.6" fill="none" stroke="#5a5a5a" stroke-width="1.5"/></svg></div><svg class="abs" style="left:0;top:0" width="1700" height="787" viewBox="0 0 1700 787"><text x="893.3" y="325" font-size="16" fill="#222" textLength="199.7" lengthAdjust="spacingAndGlyphs">Paul Wagner | 76-UYG-09</text><text x="848.9" y="378.7" font-size="13" fill="#5c5c5c" textLength="54.0" lengthAdjust="spacingAndGlyphs">8:00 AM</text><text x="967.2" y="378.7" font-size="13" fill="#5c5c5c" textLength="52.0" lengthAdjust="spacingAndGlyphs">4:56 PM</text><text x="1091.1" y="378.7" font-size="13" fill="#5c5c5c" textLength="44.7" lengthAdjust="spacingAndGlyphs">5.4 km</text><text x="1224.0" y="378.7" font-size="13" fill="#5c5c5c" textLength="13.3" lengthAdjust="spacingAndGlyphs">13</text><text x="1330.4" y="378.7" font-size="13" fill="#5c5c5c" textLength="36.4" lengthAdjust="spacingAndGlyphs">11min</text><text x="1448.9" y="378.7" font-size="13" fill="#5c5c5c" textLength="34.5" lengthAdjust="spacingAndGlyphs">8h45</text><text x="1558.3" y="378.7" font-size="13" fill="#5c5c5c" textLength="51.3" lengthAdjust="spacingAndGlyphs">€138.86</text></svg><div class="abs" style="left:825.4px;top:364.0px"><svg width="19" height="21" viewBox="0 0 19 21"><path d="M1.8 20.5 V1.2 H10.5 V11.2 H1.8 M10.5 4.2 H18.2 V14.2 H10.5 V11.2" fill="none" stroke="#5a5a5a" stroke-width="1.6"/></svg></div><div class="abs" style="left:944.7px;top:363.0px"><svg width="19" height="20" viewBox="0 0 19 20"><path d="M1.6 19.6 V1" stroke="#5a5a5a" stroke-width="1.6"/><rect x="1" y="0.5" width="17.4" height="12.6" fill="#5a5a5a"/><rect x="2.4" y="1.9" width="2.6" height="2.6" fill="#fff"/><rect x="7.6" y="1.9" width="2.6" height="2.6" fill="#fff"/><rect x="12.8" y="1.9" width="2.6" height="2.6" fill="#fff"/><rect x="5.0" y="4.5" width="2.6" height="2.6" fill="#fff"/><rect x="10.2" y="4.5" width="2.6" height="2.6" fill="#fff"/><rect x="15.4" y="4.5" width="2.6" height="2.6" fill="#fff"/><rect x="2.4" y="7.1" width="2.6" height="2.6" fill="#fff"/><rect x="7.6" y="7.1" width="2.6" height="2.6" fill="#fff"/><rect x="12.8" y="7.1" width="2.6" height="2.6" fill="#fff"/><rect x="5.0" y="9.7" width="2.6" height="2.6" fill="#fff"/><rect x="10.2" y="9.7" width="2.6" height="2.6" fill="#fff"/><rect x="15.4" y="9.7" width="2.6" height="2.6" fill="#fff"/></svg></div><div class="abs" style="left:1060.0px;top:365.2px"><svg width="26" height="17" viewBox="0 0 26 17"><path d="M4.8 1 H20.9 L24.9 16 H1 Z" fill="none" stroke="#5a5a5a" stroke-width="1.7" stroke-linejoin="round"/><path d="M12.8 1.5 V16" stroke="#5a5a5a" stroke-width="1.5" stroke-dasharray="2.2 1.6"/></svg></div><div class="abs" style="left:1198.0px;top:362.7px"><svg width="16" height="22" viewBox="0 0 16 22"><path d="M8 21 L2.2 10.8 C1 8.6 1 7.6 1 7.2 C1 3.3 4.1 0.9 8 0.9 C11.9 0.9 15 3.3 15 7.2 C15 7.6 15 8.6 13.8 10.8 Z" fill="none" stroke="#5a5a5a" stroke-width="1.6" stroke-linejoin="round"/><circle cx="7.8" cy="7" r="1.5" fill="#5a5a5a"/></svg></div><div class="abs" style="left:1301.9px;top:365.0px"><svg width="22" height="17" viewBox="0 0 22 17"><path d="M3 6.2 L4.5 1.2 H17.6 L19.1 6.2" fill="none" stroke="#5a5a5a" stroke-width="1.6" stroke-linejoin="round"/><path d="M0.3 6.2 H21.7" stroke="#5a5a5a" stroke-width="1.6"/><path d="M1.8 6.2 V15.2 H20.2 V6.2" fill="none" stroke="#5a5a5a" stroke-width="1.6"/><circle cx="4.7" cy="9.6" r="0.9" fill="#5a5a5a"/><circle cx="16.9" cy="9.6" r="0.9" fill="#5a5a5a"/><path d="M7.4 12.6 L8.2 11.4 H13.6 L14.4 12.6" fill="none" stroke="#5a5a5a" stroke-width="1.4"/><path d="M1.8 15.2 V16.4 H4.6 V15.2 M17.4 15.2 V16.4 H20.2 V15.2" fill="none" stroke="#5a5a5a" stroke-width="1.4"/></svg></div><div class="abs" style="left:1421.2px;top:364.6px"><svg width="18" height="19" viewBox="0 0 18 19"><circle cx="9" cy="6" r="5.2" fill="none" stroke="#5a5a5a" stroke-width="1.6"/><path d="M1.2 17.8 C2 12.6 5.2 10.9 9 10.9 C12.8 10.9 16 12.6 16.8 17.8" fill="none" stroke="#5a5a5a" stroke-width="1.6"/></svg></div><div class="abs" style="left:1528.0px;top:366.0px"><svg width="24" height="15" viewBox="0 0 24 15"><rect x="1" y="1" width="21.6" height="12.6" fill="none" stroke="#5a5a5a" stroke-width="1.7"/><circle cx="5.5" cy="7.2" r="0.9" fill="#5a5a5a"/><circle cx="18" cy="7.2" r="0.9" fill="#5a5a5a"/><path d="M10.4 5.3 L12 3.9 V10.6" fill="none" stroke="#5a5a5a" stroke-width="1.5"/></svg></div><svg class="abs" style="left:0;top:0" width="1700" height="787" viewBox="0 0 1700 787"><text x="893.3" y="447" font-size="16" fill="#222" textLength="186.5" lengthAdjust="spacingAndGlyphs">Pierre Patel | 65-UYG-76</text><text x="848.9" y="500.7" font-size="13" fill="#5c5c5c" textLength="54.0" lengthAdjust="spacingAndGlyphs">8:00 AM</text><text x="967.2" y="500.7" font-size="13" fill="#5c5c5c" textLength="52.0" lengthAdjust="spacingAndGlyphs">4:58 PM</text><text x="1086.8" y="500.7" font-size="13" fill="#5c5c5c" textLength="53.0" lengthAdjust="spacingAndGlyphs">6.42 km</text><text x="1226.3" y="500.7" font-size="13" fill="#5c5c5c" textLength="10.3" lengthAdjust="spacingAndGlyphs">11</text><text x="1328.7" y="500.7" font-size="13" fill="#5c5c5c" textLength="39.1" lengthAdjust="spacingAndGlyphs">13min</text><text x="1449.9" y="500.7" font-size="13" fill="#5c5c5c" textLength="32.8" lengthAdjust="spacingAndGlyphs">8h25</text><text x="1561.6" y="500.7" font-size="13" fill="#5c5c5c" textLength="44.0" lengthAdjust="spacingAndGlyphs">€170.8</text></svg><div class="abs" style="left:825.4px;top:486.0px"><svg width="19" height="21" viewBox="0 0 19 21"><path d="M1.8 20.5 V1.2 H10.5 V11.2 H1.8 M10.5 4.2 H18.2 V14.2 H10.5 V11.2" fill="none" stroke="#5a5a5a" stroke-width="1.6"/></svg></div><div class="abs" style="left:944.7px;top:485.0px"><svg width="19" height="20" viewBox="0 0 19 20"><path d="M1.6 19.6 V1" stroke="#5a5a5a" stroke-width="1.6"/><rect x="1" y="0.5" width="17.4" height="12.6" fill="#5a5a5a"/><rect x="2.4" y="1.9" width="2.6" height="2.6" fill="#fff"/><rect x="7.6" y="1.9" width="2.6" height="2.6" fill="#fff"/><rect x="12.8" y="1.9" width="2.6" height="2.6" fill="#fff"/><rect x="5.0" y="4.5" width="2.6" height="2.6" fill="#fff"/><rect x="10.2" y="4.5" width="2.6" height="2.6" fill="#fff"/><rect x="15.4" y="4.5" width="2.6" height="2.6" fill="#fff"/><rect x="2.4" y="7.1" width="2.6" height="2.6" fill="#fff"/><rect x="7.6" y="7.1" width="2.6" height="2.6" fill="#fff"/><rect x="12.8" y="7.1" width="2.6" height="2.6" fill="#fff"/><rect x="5.0" y="9.7" width="2.6" height="2.6" fill="#fff"/><rect x="10.2" y="9.7" width="2.6" height="2.6" fill="#fff"/><rect x="15.4" y="9.7" width="2.6" height="2.6" fill="#fff"/></svg></div><div class="abs" style="left:1056.0px;top:487.2px"><svg width="26" height="17" viewBox="0 0 26 17"><path d="M4.8 1 H20.9 L24.9 16 H1 Z" fill="none" stroke="#5a5a5a" stroke-width="1.7" stroke-linejoin="round"/><path d="M12.8 1.5 V16" stroke="#5a5a5a" stroke-width="1.5" stroke-dasharray="2.2 1.6"/></svg></div><div class="abs" style="left:1198.8px;top:484.7px"><svg width="16" height="22" viewBox="0 0 16 22"><path d="M8 21 L2.2 10.8 C1 8.6 1 7.6 1 7.2 C1 3.3 4.1 0.9 8 0.9 C11.9 0.9 15 3.3 15 7.2 C15 7.6 15 8.6 13.8 10.8 Z" fill="none" stroke="#5a5a5a" stroke-width="1.6" stroke-linejoin="round"/><circle cx="7.8" cy="7" r="1.5" fill="#5a5a5a"/></svg></div><div class="abs" style="left:1300.2px;top:487.0px"><svg width="22" height="17" viewBox="0 0 22 17"><path d="M3 6.2 L4.5 1.2 H17.6 L19.1 6.2" fill="none" stroke="#5a5a5a" stroke-width="1.6" stroke-linejoin="round"/><path d="M0.3 6.2 H21.7" stroke="#5a5a5a" stroke-width="1.6"/><path d="M1.8 6.2 V15.2 H20.2 V6.2" fill="none" stroke="#5a5a5a" stroke-width="1.6"/><circle cx="4.7" cy="9.6" r="0.9" fill="#5a5a5a"/><circle cx="16.9" cy="9.6" r="0.9" fill="#5a5a5a"/><path d="M7.4 12.6 L8.2 11.4 H13.6 L14.4 12.6" fill="none" stroke="#5a5a5a" stroke-width="1.4"/><path d="M1.8 15.2 V16.4 H4.6 V15.2 M17.4 15.2 V16.4 H20.2 V15.2" fill="none" stroke="#5a5a5a" stroke-width="1.4"/></svg></div><div class="abs" style="left:1422.2px;top:486.6px"><svg width="18" height="19" viewBox="0 0 18 19"><circle cx="9" cy="6" r="5.2" fill="none" stroke="#5a5a5a" stroke-width="1.6"/><path d="M1.2 17.8 C2 12.6 5.2 10.9 9 10.9 C12.8 10.9 16 12.6 16.8 17.8" fill="none" stroke="#5a5a5a" stroke-width="1.6"/></svg></div><div class="abs" style="left:1532.0px;top:488.0px"><svg width="24" height="15" viewBox="0 0 24 15"><rect x="1" y="1" width="21.6" height="12.6" fill="none" stroke="#5a5a5a" stroke-width="1.7"/><circle cx="5.5" cy="7.2" r="0.9" fill="#5a5a5a"/><circle cx="18" cy="7.2" r="0.9" fill="#5a5a5a"/><path d="M10.4 5.3 L12 3.9 V10.6" fill="none" stroke="#5a5a5a" stroke-width="1.5"/></svg></div></div>
</body></html>
